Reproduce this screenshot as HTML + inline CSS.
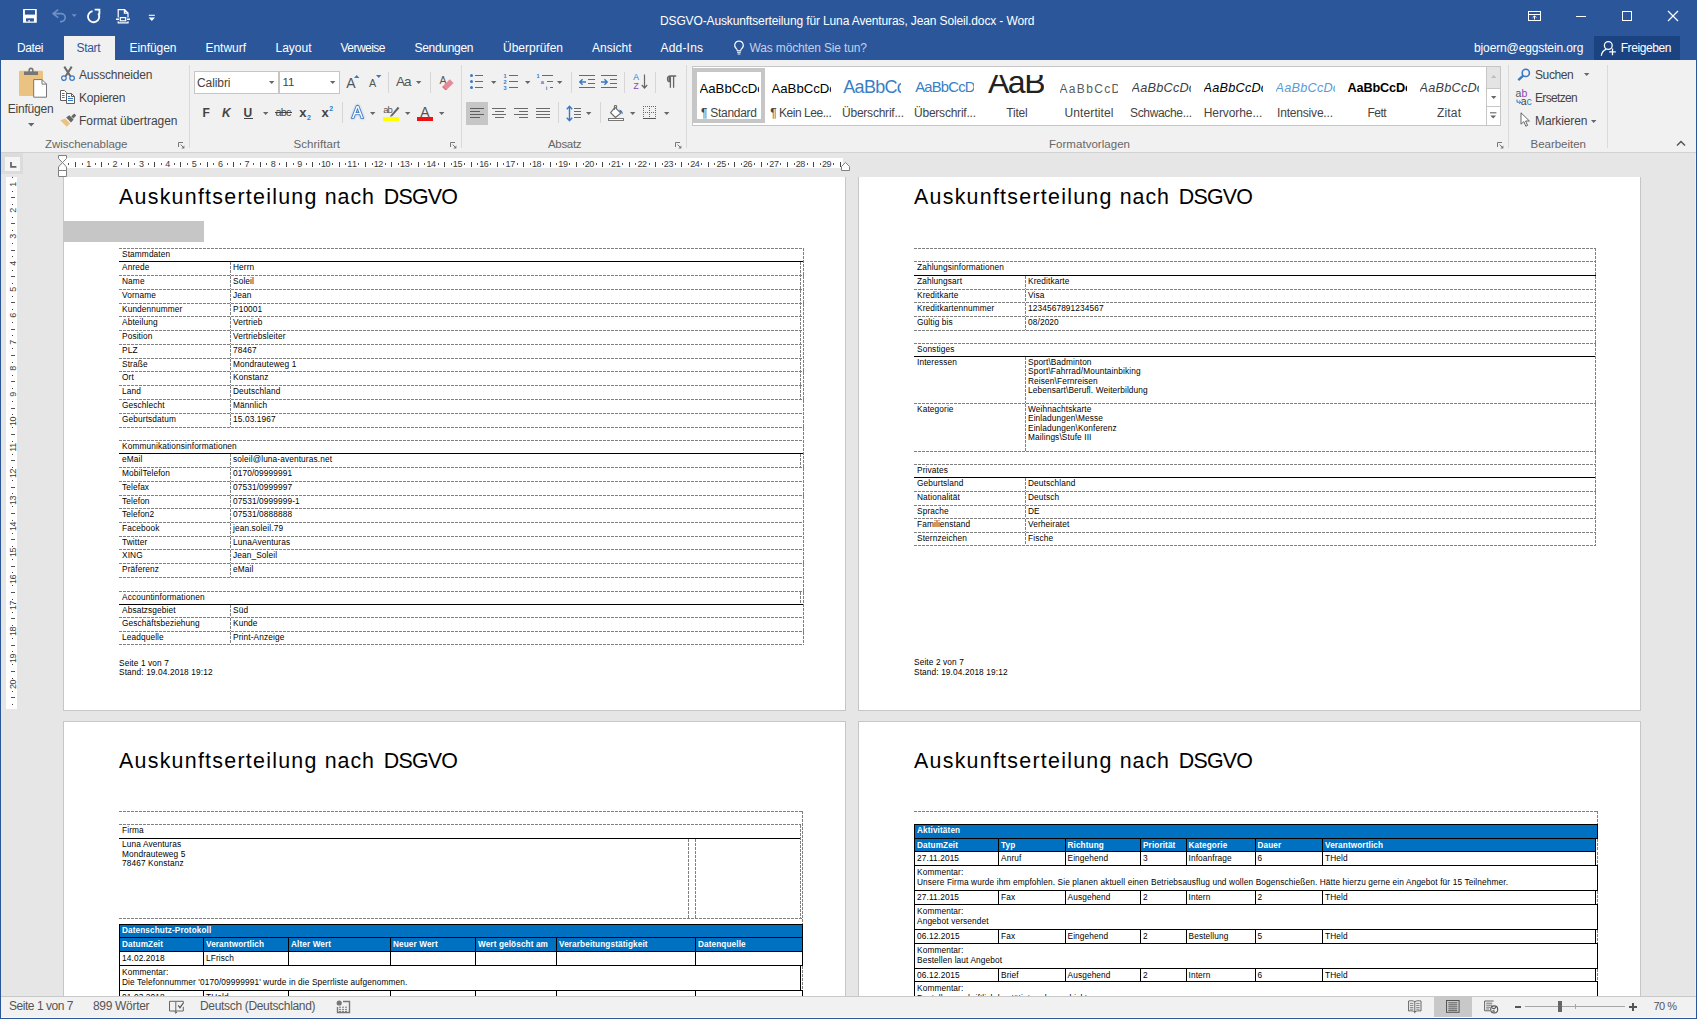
<!DOCTYPE html>
<html lang="de"><head><meta charset="utf-8"><title>DSGVO-Auskunftserteilung - Word</title><style>
html,body{margin:0;padding:0;}
body{width:1697px;height:1019px;overflow:hidden;position:relative;background:#e6e6e6;font-family:"Liberation Sans",sans-serif;}
.t{position:absolute;white-space:pre;line-height:1;}
.hd{position:absolute;height:1px;background:repeating-linear-gradient(90deg,#808080 0,#808080 3px,transparent 3px,transparent 4px);}
.vd{position:absolute;width:1px;background:repeating-linear-gradient(180deg,#808080 0,#808080 3px,transparent 3px,transparent 4px);}
</style></head>
<body>
<div style="position:absolute;left:63px;top:176px;width:783px;height:535px;background:#fff;border:1px solid #c6c6c6;box-sizing:border-box;"></div>
<div style="position:absolute;left:858px;top:176px;width:783px;height:535px;background:#fff;border:1px solid #c6c6c6;box-sizing:border-box;"></div>
<div style="position:absolute;left:63px;top:721px;width:783px;height:300px;background:#fff;border:1px solid #c6c6c6;box-sizing:border-box;"></div>
<div style="position:absolute;left:858px;top:721px;width:783px;height:300px;background:#fff;border:1px solid #c6c6c6;box-sizing:border-box;"></div>
<span class="t" style="left:119.00px;top:187.18px;font-size:21.40px;color:#000;width:340px;height:21.40px"><span style="position:absolute;left:0.00px;top:0;letter-spacing:1.261px">Auskunftserteilung</span> <span style="position:absolute;left:205.70px;top:0;letter-spacing:0.965px">nach</span> <span style="position:absolute;left:264.70px;top:0;letter-spacing:-0.749px">DSGVO</span></span>
<span class="t" style="left:914.00px;top:187.18px;font-size:21.40px;color:#000;width:340px;height:21.40px"><span style="position:absolute;left:0.00px;top:0;letter-spacing:1.261px">Auskunftserteilung</span> <span style="position:absolute;left:205.70px;top:0;letter-spacing:0.965px">nach</span> <span style="position:absolute;left:264.70px;top:0;letter-spacing:-0.749px">DSGVO</span></span>
<span class="t" style="left:119.00px;top:750.68px;font-size:21.40px;color:#000;width:340px;height:21.40px"><span style="position:absolute;left:0.00px;top:0;letter-spacing:1.261px">Auskunftserteilung</span> <span style="position:absolute;left:205.70px;top:0;letter-spacing:0.965px">nach</span> <span style="position:absolute;left:264.70px;top:0;letter-spacing:-0.749px">DSGVO</span></span>
<span class="t" style="left:914.00px;top:750.68px;font-size:21.40px;color:#000;width:340px;height:21.40px"><span style="position:absolute;left:0.00px;top:0;letter-spacing:1.261px">Auskunftserteilung</span> <span style="position:absolute;left:205.70px;top:0;letter-spacing:0.965px">nach</span> <span style="position:absolute;left:264.70px;top:0;letter-spacing:-0.749px">DSGVO</span></span>
<div style="position:absolute;left:63px;top:221px;width:140.5px;height:20.5px;background:#c6c6c6;"></div>
<div class="hd" style="left:119px;top:248px;width:685px"></div>
<span class="t" style="left:122.00px;top:249.97px;font-size:8.30px;color:#000;letter-spacing:0.120px;">Stammdaten</span>
<div style="position:absolute;left:119px;top:261px;width:685px;height:1px;background:#000;"></div>
<span class="t" style="left:122.00px;top:262.97px;font-size:8.30px;color:#000;letter-spacing:0.120px;">Anrede</span>
<span class="t" style="left:233.00px;top:262.97px;font-size:8.30px;color:#000;letter-spacing:0.120px;">Herrn</span>
<div class="vd" style="left:230px;top:262px;height:13px"></div>
<div class="hd" style="left:119px;top:275px;width:685px"></div>
<span class="t" style="left:122.00px;top:276.97px;font-size:8.30px;color:#000;letter-spacing:0.120px;">Name</span>
<span class="t" style="left:233.00px;top:276.97px;font-size:8.30px;color:#000;letter-spacing:0.120px;">Soleil</span>
<div class="vd" style="left:230px;top:276px;height:13px"></div>
<div class="hd" style="left:119px;top:289px;width:685px"></div>
<span class="t" style="left:122.00px;top:290.97px;font-size:8.30px;color:#000;letter-spacing:0.120px;">Vorname</span>
<span class="t" style="left:233.00px;top:290.97px;font-size:8.30px;color:#000;letter-spacing:0.120px;">Jean</span>
<div class="vd" style="left:230px;top:290px;height:13px"></div>
<div class="hd" style="left:119px;top:303px;width:685px"></div>
<span class="t" style="left:122.00px;top:304.97px;font-size:8.30px;color:#000;letter-spacing:0.120px;">Kundennummer</span>
<span class="t" style="left:233.00px;top:304.97px;font-size:8.30px;color:#000;letter-spacing:0.120px;">P10001</span>
<div class="vd" style="left:230px;top:304px;height:12px"></div>
<div class="hd" style="left:119px;top:316px;width:685px"></div>
<span class="t" style="left:122.00px;top:317.97px;font-size:8.30px;color:#000;letter-spacing:0.120px;">Abteilung</span>
<span class="t" style="left:233.00px;top:317.97px;font-size:8.30px;color:#000;letter-spacing:0.120px;">Vertrieb</span>
<div class="vd" style="left:230px;top:317px;height:13px"></div>
<div class="hd" style="left:119px;top:330px;width:685px"></div>
<span class="t" style="left:122.00px;top:331.97px;font-size:8.30px;color:#000;letter-spacing:0.120px;">Position</span>
<span class="t" style="left:233.00px;top:331.97px;font-size:8.30px;color:#000;letter-spacing:0.120px;">Vertriebsleiter</span>
<div class="vd" style="left:230px;top:331px;height:13px"></div>
<div class="hd" style="left:119px;top:344px;width:685px"></div>
<span class="t" style="left:122.00px;top:345.97px;font-size:8.30px;color:#000;letter-spacing:0.120px;">PLZ</span>
<span class="t" style="left:233.00px;top:345.97px;font-size:8.30px;color:#000;letter-spacing:0.120px;">78467</span>
<div class="vd" style="left:230px;top:345px;height:13px"></div>
<div class="hd" style="left:119px;top:358px;width:685px"></div>
<span class="t" style="left:122.00px;top:359.97px;font-size:8.30px;color:#000;letter-spacing:0.120px;">Straße</span>
<span class="t" style="left:233.00px;top:359.97px;font-size:8.30px;color:#000;letter-spacing:0.120px;">Mondrauteweg 1</span>
<div class="vd" style="left:230px;top:359px;height:12px"></div>
<div class="hd" style="left:119px;top:371px;width:685px"></div>
<span class="t" style="left:122.00px;top:372.97px;font-size:8.30px;color:#000;letter-spacing:0.120px;">Ort</span>
<span class="t" style="left:233.00px;top:372.97px;font-size:8.30px;color:#000;letter-spacing:0.120px;">Konstanz</span>
<div class="vd" style="left:230px;top:372px;height:13px"></div>
<div class="hd" style="left:119px;top:385px;width:685px"></div>
<span class="t" style="left:122.00px;top:386.97px;font-size:8.30px;color:#000;letter-spacing:0.120px;">Land</span>
<span class="t" style="left:233.00px;top:386.97px;font-size:8.30px;color:#000;letter-spacing:0.120px;">Deutschland</span>
<div class="vd" style="left:230px;top:386px;height:13px"></div>
<div class="hd" style="left:119px;top:399px;width:685px"></div>
<span class="t" style="left:122.00px;top:400.97px;font-size:8.30px;color:#000;letter-spacing:0.120px;">Geschlecht</span>
<span class="t" style="left:233.00px;top:400.97px;font-size:8.30px;color:#000;letter-spacing:0.120px;">Männlich</span>
<div class="vd" style="left:230px;top:400px;height:13px"></div>
<div class="hd" style="left:119px;top:413px;width:685px"></div>
<span class="t" style="left:122.00px;top:414.97px;font-size:8.30px;color:#000;letter-spacing:0.120px;">Geburtsdatum</span>
<span class="t" style="left:233.00px;top:414.97px;font-size:8.30px;color:#000;letter-spacing:0.120px;">15.03.1967</span>
<div class="vd" style="left:230px;top:414px;height:13px"></div>
<div class="hd" style="left:119px;top:427px;width:685px"></div>
<div class="hd" style="left:119px;top:440px;width:685px"></div>
<span class="t" style="left:122.00px;top:441.97px;font-size:8.30px;color:#000;letter-spacing:0.120px;">Kommunikationsinformationen</span>
<div style="position:absolute;left:119px;top:453px;width:685px;height:1px;background:#000;"></div>
<span class="t" style="left:122.00px;top:454.97px;font-size:8.30px;color:#000;letter-spacing:0.120px;">eMail</span>
<span class="t" style="left:233.00px;top:454.97px;font-size:8.30px;color:#000;letter-spacing:0.120px;">soleil@luna-aventuras.net</span>
<div class="vd" style="left:230px;top:454px;height:13px"></div>
<div class="hd" style="left:119px;top:467px;width:685px"></div>
<span class="t" style="left:122.00px;top:468.97px;font-size:8.30px;color:#000;letter-spacing:0.120px;">MobilTelefon</span>
<span class="t" style="left:233.00px;top:468.97px;font-size:8.30px;color:#000;letter-spacing:0.120px;">0170/09999991</span>
<div class="vd" style="left:230px;top:468px;height:13px"></div>
<div class="hd" style="left:119px;top:481px;width:685px"></div>
<span class="t" style="left:122.00px;top:482.97px;font-size:8.30px;color:#000;letter-spacing:0.120px;">Telefax</span>
<span class="t" style="left:233.00px;top:482.97px;font-size:8.30px;color:#000;letter-spacing:0.120px;">07531/0999997</span>
<div class="vd" style="left:230px;top:482px;height:13px"></div>
<div class="hd" style="left:119px;top:495px;width:685px"></div>
<span class="t" style="left:122.00px;top:496.97px;font-size:8.30px;color:#000;letter-spacing:0.120px;">Telefon</span>
<span class="t" style="left:233.00px;top:496.97px;font-size:8.30px;color:#000;letter-spacing:0.120px;">07531/0999999-1</span>
<div class="vd" style="left:230px;top:496px;height:12px"></div>
<div class="hd" style="left:119px;top:508px;width:685px"></div>
<span class="t" style="left:122.00px;top:509.97px;font-size:8.30px;color:#000;letter-spacing:0.120px;">Telefon2</span>
<span class="t" style="left:233.00px;top:509.97px;font-size:8.30px;color:#000;letter-spacing:0.120px;">07531/0888888</span>
<div class="vd" style="left:230px;top:509px;height:13px"></div>
<div class="hd" style="left:119px;top:522px;width:685px"></div>
<span class="t" style="left:122.00px;top:523.97px;font-size:8.30px;color:#000;letter-spacing:0.120px;">Facebook</span>
<span class="t" style="left:233.00px;top:523.97px;font-size:8.30px;color:#000;letter-spacing:0.120px;">jean.soleil.79</span>
<div class="vd" style="left:230px;top:523px;height:13px"></div>
<div class="hd" style="left:119px;top:536px;width:685px"></div>
<span class="t" style="left:122.00px;top:537.97px;font-size:8.30px;color:#000;letter-spacing:0.120px;">Twitter</span>
<span class="t" style="left:233.00px;top:537.97px;font-size:8.30px;color:#000;letter-spacing:0.120px;">LunaAventuras</span>
<div class="vd" style="left:230px;top:537px;height:12px"></div>
<div class="hd" style="left:119px;top:549px;width:685px"></div>
<span class="t" style="left:122.00px;top:550.97px;font-size:8.30px;color:#000;letter-spacing:0.120px;">XING</span>
<span class="t" style="left:233.00px;top:550.97px;font-size:8.30px;color:#000;letter-spacing:0.120px;">Jean_Soleil</span>
<div class="vd" style="left:230px;top:550px;height:13px"></div>
<div class="hd" style="left:119px;top:563px;width:685px"></div>
<span class="t" style="left:122.00px;top:564.97px;font-size:8.30px;color:#000;letter-spacing:0.120px;">Präferenz</span>
<span class="t" style="left:233.00px;top:564.97px;font-size:8.30px;color:#000;letter-spacing:0.120px;">eMail</span>
<div class="vd" style="left:230px;top:564px;height:13px"></div>
<div class="hd" style="left:119px;top:577px;width:685px"></div>
<div class="hd" style="left:119px;top:591px;width:685px"></div>
<span class="t" style="left:122.00px;top:592.97px;font-size:8.30px;color:#000;letter-spacing:0.120px;">Accountinformationen</span>
<div style="position:absolute;left:119px;top:604px;width:685px;height:1px;background:#000;"></div>
<span class="t" style="left:122.00px;top:605.97px;font-size:8.30px;color:#000;letter-spacing:0.120px;">Absatzsgebiet</span>
<span class="t" style="left:233.00px;top:605.97px;font-size:8.30px;color:#000;letter-spacing:0.120px;">Süd</span>
<div class="vd" style="left:230px;top:605px;height:12px"></div>
<div class="hd" style="left:119px;top:617px;width:685px"></div>
<span class="t" style="left:122.00px;top:618.97px;font-size:8.30px;color:#000;letter-spacing:0.120px;">Geschäftsbeziehung</span>
<span class="t" style="left:233.00px;top:618.97px;font-size:8.30px;color:#000;letter-spacing:0.120px;">Kunde</span>
<div class="vd" style="left:230px;top:618px;height:13px"></div>
<div class="hd" style="left:119px;top:631px;width:685px"></div>
<span class="t" style="left:122.00px;top:632.97px;font-size:8.30px;color:#000;letter-spacing:0.120px;">Leadquelle</span>
<span class="t" style="left:233.00px;top:632.97px;font-size:8.30px;color:#000;letter-spacing:0.120px;">Print-Anzeige</span>
<div class="vd" style="left:230px;top:632px;height:12px"></div>
<div class="hd" style="left:119px;top:644px;width:685px"></div>
<div class="vd" style="left:803px;top:248px;height:396px"></div>
<div class="vd" style="left:800px;top:262px;height:137px"></div>
<div class="vd" style="left:800px;top:454px;height:13px"></div>
<div class="vd" style="left:800px;top:592px;height:12px"></div>
<span class="t" style="left:119.00px;top:658.97px;font-size:8.30px;color:#000;letter-spacing:0.120px;">Seite 1 von 7</span>
<span class="t" style="left:119.00px;top:668.37px;font-size:8.30px;color:#000;letter-spacing:0.120px;">Stand: 19.04.2018 19:12</span>
<div class="hd" style="left:914px;top:248px;width:682px"></div>
<div class="hd" style="left:914px;top:261px;width:682px"></div>
<span class="t" style="left:917.00px;top:262.97px;font-size:8.30px;color:#000;letter-spacing:0.120px;">Zahlungsinformationen</span>
<div style="position:absolute;left:914px;top:275px;width:682px;height:1px;background:#000;"></div>
<span class="t" style="left:917.00px;top:276.97px;font-size:8.30px;color:#000;letter-spacing:0.120px;">Zahlungsart</span>
<span class="t" style="left:1028.00px;top:276.97px;font-size:8.30px;color:#000;letter-spacing:0.120px;">Kreditkarte</span>
<div class="vd" style="left:1025px;top:276px;height:13px"></div>
<div class="hd" style="left:914px;top:289px;width:682px"></div>
<span class="t" style="left:917.00px;top:290.97px;font-size:8.30px;color:#000;letter-spacing:0.120px;">Kreditkarte</span>
<span class="t" style="left:1028.00px;top:290.97px;font-size:8.30px;color:#000;letter-spacing:0.120px;">Visa</span>
<div class="vd" style="left:1025px;top:290px;height:12px"></div>
<div class="hd" style="left:914px;top:302px;width:682px"></div>
<span class="t" style="left:917.00px;top:303.97px;font-size:8.30px;color:#000;letter-spacing:0.120px;">Kreditkartennummer</span>
<span class="t" style="left:1028.00px;top:303.97px;font-size:8.30px;color:#000;letter-spacing:0.120px;">1234567891234567</span>
<div class="vd" style="left:1025px;top:303px;height:13px"></div>
<div class="hd" style="left:914px;top:316px;width:682px"></div>
<span class="t" style="left:917.00px;top:317.97px;font-size:8.30px;color:#000;letter-spacing:0.120px;">Gültig bis</span>
<span class="t" style="left:1028.00px;top:317.97px;font-size:8.30px;color:#000;letter-spacing:0.120px;">08/2020</span>
<div class="vd" style="left:1025px;top:317px;height:13px"></div>
<div class="hd" style="left:914px;top:330px;width:682px"></div>
<div class="hd" style="left:914px;top:343px;width:682px"></div>
<span class="t" style="left:917.00px;top:344.97px;font-size:8.30px;color:#000;letter-spacing:0.120px;">Sonstiges</span>
<div style="position:absolute;left:914px;top:356px;width:682px;height:1px;background:#000;"></div>
<span class="t" style="left:917.00px;top:357.97px;font-size:8.30px;color:#000;letter-spacing:0.120px;">Interessen</span>
<span class="t" style="left:1028.00px;top:357.97px;font-size:8.30px;color:#000;letter-spacing:0.120px;">Sport\Badminton</span>
<span class="t" style="left:1028.00px;top:367.32px;font-size:8.30px;color:#000;letter-spacing:0.120px;">Sport\Fahrrad/Mountainbiking</span>
<span class="t" style="left:1028.00px;top:376.67px;font-size:8.30px;color:#000;letter-spacing:0.120px;">Reisen\Fernreisen</span>
<span class="t" style="left:1028.00px;top:386.02px;font-size:8.30px;color:#000;letter-spacing:0.120px;">Lebensart\Berufl. Weiterbildung</span>
<div class="vd" style="left:1025px;top:357px;height:46px"></div>
<div class="hd" style="left:914px;top:403px;width:682px"></div>
<span class="t" style="left:917.00px;top:404.97px;font-size:8.30px;color:#000;letter-spacing:0.120px;">Kategorie</span>
<span class="t" style="left:1028.00px;top:404.97px;font-size:8.30px;color:#000;letter-spacing:0.120px;">Weihnachtskarte</span>
<span class="t" style="left:1028.00px;top:414.32px;font-size:8.30px;color:#000;letter-spacing:0.120px;">Einladungen\Messe</span>
<span class="t" style="left:1028.00px;top:423.67px;font-size:8.30px;color:#000;letter-spacing:0.120px;">Einladungen\Konferenz</span>
<span class="t" style="left:1028.00px;top:433.02px;font-size:8.30px;color:#000;letter-spacing:0.120px;">Mailings\Stufe III</span>
<div class="vd" style="left:1025px;top:404px;height:47px"></div>
<div class="hd" style="left:914px;top:451px;width:682px"></div>
<div class="hd" style="left:914px;top:464px;width:682px"></div>
<span class="t" style="left:917.00px;top:465.97px;font-size:8.30px;color:#000;letter-spacing:0.120px;">Privates</span>
<div style="position:absolute;left:914px;top:477px;width:682px;height:1px;background:#000;"></div>
<span class="t" style="left:917.00px;top:478.97px;font-size:8.30px;color:#000;letter-spacing:0.120px;">Geburtsland</span>
<span class="t" style="left:1028.00px;top:478.97px;font-size:8.30px;color:#000;letter-spacing:0.120px;">Deutschland</span>
<div class="vd" style="left:1025px;top:478px;height:13px"></div>
<div class="hd" style="left:914px;top:491px;width:682px"></div>
<span class="t" style="left:917.00px;top:492.97px;font-size:8.30px;color:#000;letter-spacing:0.120px;">Nationalität</span>
<span class="t" style="left:1028.00px;top:492.97px;font-size:8.30px;color:#000;letter-spacing:0.120px;">Deutsch</span>
<div class="vd" style="left:1025px;top:492px;height:13px"></div>
<div class="hd" style="left:914px;top:505px;width:682px"></div>
<span class="t" style="left:917.00px;top:506.97px;font-size:8.30px;color:#000;letter-spacing:0.120px;">Sprache</span>
<span class="t" style="left:1028.00px;top:506.97px;font-size:8.30px;color:#000;letter-spacing:0.120px;">DE</span>
<div class="vd" style="left:1025px;top:506px;height:12px"></div>
<div class="hd" style="left:914px;top:518px;width:682px"></div>
<span class="t" style="left:917.00px;top:519.97px;font-size:8.30px;color:#000;letter-spacing:0.120px;">Familienstand</span>
<span class="t" style="left:1028.00px;top:519.97px;font-size:8.30px;color:#000;letter-spacing:0.120px;">Verheiratet</span>
<div class="vd" style="left:1025px;top:519px;height:13px"></div>
<div class="hd" style="left:914px;top:532px;width:682px"></div>
<span class="t" style="left:917.00px;top:533.97px;font-size:8.30px;color:#000;letter-spacing:0.120px;">Sternzeichen</span>
<span class="t" style="left:1028.00px;top:533.97px;font-size:8.30px;color:#000;letter-spacing:0.120px;">Fische</span>
<div class="vd" style="left:1025px;top:533px;height:12px"></div>
<div class="hd" style="left:914px;top:545px;width:682px"></div>
<div class="vd" style="left:1595px;top:248px;height:297px"></div>
<span class="t" style="left:914.00px;top:658.47px;font-size:8.30px;color:#000;letter-spacing:0.120px;">Seite 2 von 7</span>
<span class="t" style="left:914.00px;top:667.97px;font-size:8.30px;color:#000;letter-spacing:0.120px;">Stand: 19.04.2018 19:12</span>
<div class="hd" style="left:119px;top:811px;width:684px"></div>
<div class="vd" style="left:802px;top:811px;height:113px"></div>
<div class="hd" style="left:119px;top:824px;width:682px"></div>
<span class="t" style="left:122.00px;top:826.47px;font-size:8.30px;color:#000;letter-spacing:0.120px;">Firma</span>
<div style="position:absolute;left:119px;top:838px;width:682px;height:1px;background:#000;"></div>
<span class="t" style="left:122.00px;top:840.27px;font-size:8.30px;color:#000;letter-spacing:0.120px;">Luna Aventuras</span>
<span class="t" style="left:122.00px;top:849.77px;font-size:8.30px;color:#000;letter-spacing:0.120px;">Mondrauteweg 5</span>
<span class="t" style="left:122.00px;top:859.27px;font-size:8.30px;color:#000;letter-spacing:0.120px;">78467 Konstanz</span>
<div class="vd" style="left:688px;top:839px;height:79px"></div>
<div class="vd" style="left:695px;top:839px;height:79px"></div>
<div class="vd" style="left:800px;top:825px;height:93px"></div>
<div class="hd" style="left:119px;top:918px;width:684px"></div>
<div style="position:absolute;left:119px;top:924px;width:684px;height:13px;background:#0070c0;"></div>
<div style="position:absolute;left:119px;top:937px;width:684px;height:14px;background:#0070c0;"></div>
<span class="t" style="left:122.00px;top:927.26px;font-size:8.20px;color:#fff;font-weight:bold;letter-spacing:0.120px;">Datenschutz-Protokoll</span>
<span class="t" style="left:122.00px;top:940.76px;font-size:8.20px;color:#fff;font-weight:bold;letter-spacing:0.120px;">DatumZeit</span>
<span class="t" style="left:206.00px;top:940.76px;font-size:8.20px;color:#fff;font-weight:bold;letter-spacing:0.120px;">Verantwortlich</span>
<span class="t" style="left:291.00px;top:940.76px;font-size:8.20px;color:#fff;font-weight:bold;letter-spacing:0.120px;">Alter Wert</span>
<span class="t" style="left:393.00px;top:940.76px;font-size:8.20px;color:#fff;font-weight:bold;letter-spacing:0.120px;">Neuer Wert</span>
<span class="t" style="left:478.00px;top:940.76px;font-size:8.20px;color:#fff;font-weight:bold;letter-spacing:0.120px;">Wert gelöscht am</span>
<span class="t" style="left:559.00px;top:940.76px;font-size:8.20px;color:#fff;font-weight:bold;letter-spacing:0.120px;">Verarbeitungstätigkeit</span>
<span class="t" style="left:698.00px;top:940.76px;font-size:8.20px;color:#fff;font-weight:bold;letter-spacing:0.120px;">Datenquelle</span>
<div style="position:absolute;left:119px;top:924px;width:684px;height:1px;background:#000;"></div>
<div style="position:absolute;left:119px;top:937px;width:684px;height:1px;background:#000;"></div>
<div style="position:absolute;left:119px;top:951px;width:684px;height:1px;background:#000;"></div>
<div style="position:absolute;left:802px;top:924px;width:1px;height:14px;background:#000;"></div>
<div style="position:absolute;left:802px;top:937px;width:1px;height:14px;background:#000;"></div>
<div style="position:absolute;left:203px;top:937px;width:1px;height:14px;background:#000;"></div>
<div style="position:absolute;left:288px;top:937px;width:1px;height:14px;background:#000;"></div>
<div style="position:absolute;left:390px;top:937px;width:1px;height:14px;background:#000;"></div>
<div style="position:absolute;left:475px;top:937px;width:1px;height:14px;background:#000;"></div>
<div style="position:absolute;left:556px;top:937px;width:1px;height:14px;background:#000;"></div>
<div style="position:absolute;left:695px;top:937px;width:1px;height:14px;background:#000;"></div>
<span class="t" style="left:122.00px;top:954.27px;font-size:8.30px;color:#000;letter-spacing:0.120px;">14.02.2018</span>
<span class="t" style="left:206.00px;top:954.27px;font-size:8.30px;color:#000;letter-spacing:0.120px;">LFrisch</span>
<div style="position:absolute;left:203px;top:951px;width:1px;height:14px;background:#000;"></div>
<div style="position:absolute;left:288px;top:951px;width:1px;height:14px;background:#000;"></div>
<div style="position:absolute;left:390px;top:951px;width:1px;height:14px;background:#000;"></div>
<div style="position:absolute;left:475px;top:951px;width:1px;height:14px;background:#000;"></div>
<div style="position:absolute;left:556px;top:951px;width:1px;height:14px;background:#000;"></div>
<div style="position:absolute;left:695px;top:951px;width:1px;height:14px;background:#000;"></div>
<div style="position:absolute;left:119px;top:965px;width:684px;height:1px;background:#000;"></div>
<div style="position:absolute;left:802px;top:951px;width:1px;height:15px;background:#000;"></div>
<span class="t" style="left:122.00px;top:967.97px;font-size:8.30px;color:#000;letter-spacing:0.120px;">Kommentar:</span>
<span class="t" style="left:122.00px;top:978.17px;font-size:8.30px;color:#000;letter-spacing:0.120px;">Die Telefonnummer &#x27;0170/09999991&#x27; wurde in die Sperrliste aufgenommen.</span>
<div style="position:absolute;left:119px;top:990px;width:684px;height:1px;background:#000;"></div>
<div style="position:absolute;left:800px;top:965px;width:1px;height:26px;background:#000;"></div>
<div class="vd" style="left:802px;top:966px;height:24px"></div>
<span class="t" style="left:122.00px;top:993.27px;font-size:8.30px;color:#000;letter-spacing:0.120px;">01.03.2018</span>
<span class="t" style="left:206.00px;top:993.27px;font-size:8.30px;color:#000;letter-spacing:0.120px;">THeld</span>
<div style="position:absolute;left:203px;top:990px;width:1px;height:14px;background:#000;"></div>
<div style="position:absolute;left:288px;top:990px;width:1px;height:14px;background:#000;"></div>
<div style="position:absolute;left:390px;top:990px;width:1px;height:14px;background:#000;"></div>
<div style="position:absolute;left:475px;top:990px;width:1px;height:14px;background:#000;"></div>
<div style="position:absolute;left:556px;top:990px;width:1px;height:14px;background:#000;"></div>
<div style="position:absolute;left:695px;top:990px;width:1px;height:14px;background:#000;"></div>
<div style="position:absolute;left:119px;top:1004px;width:684px;height:1px;background:#000;"></div>
<div style="position:absolute;left:802px;top:990px;width:1px;height:15px;background:#000;"></div>
<div style="position:absolute;left:119px;top:924px;width:1px;height:76px;background:#000;"></div>
<div class="hd" style="left:914px;top:811px;width:684px"></div>
<div class="vd" style="left:1597px;top:811px;height:13px"></div>
<div style="position:absolute;left:914px;top:824px;width:684px;height:14px;background:#0070c0;"></div>
<div style="position:absolute;left:914px;top:838px;width:682px;height:13px;background:#0070c0;"></div>
<span class="t" style="left:917.00px;top:827.26px;font-size:8.20px;color:#fff;font-weight:bold;letter-spacing:0.120px;">Aktivitäten</span>
<span class="t" style="left:917.00px;top:841.76px;font-size:8.20px;color:#fff;font-weight:bold;letter-spacing:0.120px;">DatumZeit</span>
<span class="t" style="left:1001.00px;top:841.76px;font-size:8.20px;color:#fff;font-weight:bold;letter-spacing:0.120px;">Typ</span>
<span class="t" style="left:1067.50px;top:841.76px;font-size:8.20px;color:#fff;font-weight:bold;letter-spacing:0.120px;">Richtung</span>
<span class="t" style="left:1143.00px;top:841.76px;font-size:8.20px;color:#fff;font-weight:bold;letter-spacing:0.120px;">Priorität</span>
<span class="t" style="left:1188.50px;top:841.76px;font-size:8.20px;color:#fff;font-weight:bold;letter-spacing:0.120px;">Kategorie</span>
<span class="t" style="left:1257.50px;top:841.76px;font-size:8.20px;color:#fff;font-weight:bold;letter-spacing:0.120px;">Dauer</span>
<span class="t" style="left:1325.00px;top:841.76px;font-size:8.20px;color:#fff;font-weight:bold;letter-spacing:0.120px;">Verantwortlich</span>
<div style="position:absolute;left:914px;top:824px;width:684px;height:1px;background:#000;"></div>
<div style="position:absolute;left:914px;top:838px;width:684px;height:1px;background:#000;"></div>
<div style="position:absolute;left:914px;top:851px;width:682px;height:1px;background:#000;"></div>
<div style="position:absolute;left:1597px;top:824px;width:1px;height:15px;background:#000;"></div>
<div style="position:absolute;left:1595px;top:838px;width:1px;height:13px;background:#000;"></div>
<div class="vd" style="left:1597px;top:839px;height:12px"></div>
<div style="position:absolute;left:998px;top:838px;width:1px;height:13px;background:#000;"></div>
<div style="position:absolute;left:1064.5px;top:838px;width:1px;height:13px;background:#000;"></div>
<div style="position:absolute;left:1140px;top:838px;width:1px;height:13px;background:#000;"></div>
<div style="position:absolute;left:1185.5px;top:838px;width:1px;height:13px;background:#000;"></div>
<div style="position:absolute;left:1254.5px;top:838px;width:1px;height:13px;background:#000;"></div>
<div style="position:absolute;left:1322px;top:838px;width:1px;height:13px;background:#000;"></div>
<span class="t" style="left:917.00px;top:854.27px;font-size:8.30px;color:#000;letter-spacing:0.120px;">27.11.2015</span>
<span class="t" style="left:1001.00px;top:854.27px;font-size:8.30px;color:#000;letter-spacing:0.120px;">Anruf</span>
<span class="t" style="left:1067.50px;top:854.27px;font-size:8.30px;color:#000;letter-spacing:0.120px;">Eingehend</span>
<span class="t" style="left:1143.00px;top:854.27px;font-size:8.30px;color:#000;letter-spacing:0.120px;">3</span>
<span class="t" style="left:1188.50px;top:854.27px;font-size:8.30px;color:#000;letter-spacing:0.120px;">Infoanfrage</span>
<span class="t" style="left:1257.50px;top:854.27px;font-size:8.30px;color:#000;letter-spacing:0.120px;">6</span>
<span class="t" style="left:1325.00px;top:854.27px;font-size:8.30px;color:#000;letter-spacing:0.120px;">THeld</span>
<div style="position:absolute;left:998px;top:851px;width:1px;height:14px;background:#000;"></div>
<div style="position:absolute;left:1064.5px;top:851px;width:1px;height:14px;background:#000;"></div>
<div style="position:absolute;left:1140px;top:851px;width:1px;height:14px;background:#000;"></div>
<div style="position:absolute;left:1185.5px;top:851px;width:1px;height:14px;background:#000;"></div>
<div style="position:absolute;left:1254.5px;top:851px;width:1px;height:14px;background:#000;"></div>
<div style="position:absolute;left:1322px;top:851px;width:1px;height:14px;background:#000;"></div>
<div style="position:absolute;left:914px;top:865px;width:684px;height:1px;background:#000;"></div>
<div style="position:absolute;left:1595px;top:851px;width:1px;height:15px;background:#000;"></div>
<div class="vd" style="left:1597px;top:852px;height:13px"></div>
<span class="t" style="left:917.00px;top:867.97px;font-size:8.30px;color:#000;letter-spacing:0.120px;">Kommentar:</span>
<span class="t" style="left:917.00px;top:878.17px;font-size:8.30px;color:#000;letter-spacing:0.120px;">Unsere Firma wurde ihm empfohlen. Sie planen aktuell einen Betriebsausflug und wollen Bogenschießen. Hätte hierzu gerne ein Angebot für 15 Teilnehmer.</span>
<div style="position:absolute;left:914px;top:890px;width:684px;height:1px;background:#000;"></div>
<div style="position:absolute;left:1597px;top:865px;width:1px;height:26px;background:#000;"></div>
<span class="t" style="left:917.00px;top:893.27px;font-size:8.30px;color:#000;letter-spacing:0.120px;">27.11.2015</span>
<span class="t" style="left:1001.00px;top:893.27px;font-size:8.30px;color:#000;letter-spacing:0.120px;">Fax</span>
<span class="t" style="left:1067.50px;top:893.27px;font-size:8.30px;color:#000;letter-spacing:0.120px;">Ausgehend</span>
<span class="t" style="left:1143.00px;top:893.27px;font-size:8.30px;color:#000;letter-spacing:0.120px;">2</span>
<span class="t" style="left:1188.50px;top:893.27px;font-size:8.30px;color:#000;letter-spacing:0.120px;">Intern</span>
<span class="t" style="left:1257.50px;top:893.27px;font-size:8.30px;color:#000;letter-spacing:0.120px;">2</span>
<span class="t" style="left:1325.00px;top:893.27px;font-size:8.30px;color:#000;letter-spacing:0.120px;">THeld</span>
<div style="position:absolute;left:998px;top:890px;width:1px;height:14px;background:#000;"></div>
<div style="position:absolute;left:1064.5px;top:890px;width:1px;height:14px;background:#000;"></div>
<div style="position:absolute;left:1140px;top:890px;width:1px;height:14px;background:#000;"></div>
<div style="position:absolute;left:1185.5px;top:890px;width:1px;height:14px;background:#000;"></div>
<div style="position:absolute;left:1254.5px;top:890px;width:1px;height:14px;background:#000;"></div>
<div style="position:absolute;left:1322px;top:890px;width:1px;height:14px;background:#000;"></div>
<div style="position:absolute;left:914px;top:904px;width:684px;height:1px;background:#000;"></div>
<div style="position:absolute;left:1595px;top:890px;width:1px;height:15px;background:#000;"></div>
<div class="vd" style="left:1597px;top:891px;height:13px"></div>
<span class="t" style="left:917.00px;top:906.97px;font-size:8.30px;color:#000;letter-spacing:0.120px;">Kommentar:</span>
<span class="t" style="left:917.00px;top:917.17px;font-size:8.30px;color:#000;letter-spacing:0.120px;">Angebot versendet</span>
<div style="position:absolute;left:914px;top:929px;width:684px;height:1px;background:#000;"></div>
<div style="position:absolute;left:1597px;top:904px;width:1px;height:26px;background:#000;"></div>
<span class="t" style="left:917.00px;top:932.27px;font-size:8.30px;color:#000;letter-spacing:0.120px;">06.12.2015</span>
<span class="t" style="left:1001.00px;top:932.27px;font-size:8.30px;color:#000;letter-spacing:0.120px;">Fax</span>
<span class="t" style="left:1067.50px;top:932.27px;font-size:8.30px;color:#000;letter-spacing:0.120px;">Eingehend</span>
<span class="t" style="left:1143.00px;top:932.27px;font-size:8.30px;color:#000;letter-spacing:0.120px;">2</span>
<span class="t" style="left:1188.50px;top:932.27px;font-size:8.30px;color:#000;letter-spacing:0.120px;">Bestellung</span>
<span class="t" style="left:1257.50px;top:932.27px;font-size:8.30px;color:#000;letter-spacing:0.120px;">5</span>
<span class="t" style="left:1325.00px;top:932.27px;font-size:8.30px;color:#000;letter-spacing:0.120px;">THeld</span>
<div style="position:absolute;left:998px;top:929px;width:1px;height:14px;background:#000;"></div>
<div style="position:absolute;left:1064.5px;top:929px;width:1px;height:14px;background:#000;"></div>
<div style="position:absolute;left:1140px;top:929px;width:1px;height:14px;background:#000;"></div>
<div style="position:absolute;left:1185.5px;top:929px;width:1px;height:14px;background:#000;"></div>
<div style="position:absolute;left:1254.5px;top:929px;width:1px;height:14px;background:#000;"></div>
<div style="position:absolute;left:1322px;top:929px;width:1px;height:14px;background:#000;"></div>
<div style="position:absolute;left:914px;top:943px;width:684px;height:1px;background:#000;"></div>
<div style="position:absolute;left:1595px;top:929px;width:1px;height:15px;background:#000;"></div>
<div class="vd" style="left:1597px;top:930px;height:13px"></div>
<span class="t" style="left:917.00px;top:945.97px;font-size:8.30px;color:#000;letter-spacing:0.120px;">Kommentar:</span>
<span class="t" style="left:917.00px;top:956.17px;font-size:8.30px;color:#000;letter-spacing:0.120px;">Bestellen laut Angebot</span>
<div style="position:absolute;left:914px;top:968px;width:684px;height:1px;background:#000;"></div>
<div style="position:absolute;left:1597px;top:943px;width:1px;height:26px;background:#000;"></div>
<span class="t" style="left:917.00px;top:971.27px;font-size:8.30px;color:#000;letter-spacing:0.120px;">06.12.2015</span>
<span class="t" style="left:1001.00px;top:971.27px;font-size:8.30px;color:#000;letter-spacing:0.120px;">Brief</span>
<span class="t" style="left:1067.50px;top:971.27px;font-size:8.30px;color:#000;letter-spacing:0.120px;">Ausgehend</span>
<span class="t" style="left:1143.00px;top:971.27px;font-size:8.30px;color:#000;letter-spacing:0.120px;">2</span>
<span class="t" style="left:1188.50px;top:971.27px;font-size:8.30px;color:#000;letter-spacing:0.120px;">Intern</span>
<span class="t" style="left:1257.50px;top:971.27px;font-size:8.30px;color:#000;letter-spacing:0.120px;">6</span>
<span class="t" style="left:1325.00px;top:971.27px;font-size:8.30px;color:#000;letter-spacing:0.120px;">THeld</span>
<div style="position:absolute;left:998px;top:968px;width:1px;height:13px;background:#000;"></div>
<div style="position:absolute;left:1064.5px;top:968px;width:1px;height:13px;background:#000;"></div>
<div style="position:absolute;left:1140px;top:968px;width:1px;height:13px;background:#000;"></div>
<div style="position:absolute;left:1185.5px;top:968px;width:1px;height:13px;background:#000;"></div>
<div style="position:absolute;left:1254.5px;top:968px;width:1px;height:13px;background:#000;"></div>
<div style="position:absolute;left:1322px;top:968px;width:1px;height:13px;background:#000;"></div>
<div style="position:absolute;left:914px;top:981px;width:684px;height:1px;background:#000;"></div>
<div style="position:absolute;left:1595px;top:968px;width:1px;height:14px;background:#000;"></div>
<div class="vd" style="left:1597px;top:969px;height:12px"></div>
<span class="t" style="left:917.00px;top:983.97px;font-size:8.30px;color:#000;letter-spacing:0.120px;">Kommentar:</span>
<span class="t" style="left:917.00px;top:994.17px;font-size:8.30px;color:#000;letter-spacing:0.120px;">Bestellung schriftlich bestätigt und verschickt</span>
<div style="position:absolute;left:914px;top:1006px;width:684px;height:1px;background:#000;"></div>
<div style="position:absolute;left:1597px;top:981px;width:1px;height:26px;background:#000;"></div>
<div style="position:absolute;left:914px;top:824px;width:1px;height:176px;background:#000;"></div>
<div style="position:absolute;left:0px;top:0px;width:1697px;height:60px;background:#2b579a;"></div>
<div style="position:absolute;left:0px;top:60px;width:1697px;height:92px;background:#f1f1f1;"></div>
<div style="position:absolute;left:0px;top:152px;width:1697px;height:1px;background:#d2d2d2;"></div>
<svg style="position:absolute;left:23px;top:9px;" width="14" height="14" viewBox="0 0 14 14"><rect x="0" y="0" width="13.800" height="13.800" rx="0.500" fill="#fff"/><rect x="1.900" y="1.100" width="10.100" height="4.500" fill="#2b579a"/><rect x="3" y="9.300" width="7.900" height="3.200" fill="#2b579a"/><rect x="5.300" y="11.200" width="1.700" height="1.400" fill="#fff"/></svg>
<svg style="position:absolute;left:51px;top:8px;" width="26" height="16" viewBox="0 0 26 16"><path d="M7.2 1.6 L2 5.6 L7.2 9.6 M2.4 5.6 H10.2 A4 4 0 0 1 10.2 13.6 H9" fill="none" stroke="#6f8fc6" stroke-width="1.7" stroke-linejoin="round"/><path d="M20.6 6.2h5.2l-2.6 2.8z" fill="#6f8fc6"/></svg>
<svg style="position:absolute;left:86px;top:8px;" width="16" height="16" viewBox="0 0 16 16"><path d="M6.600 3.100A5.600 5.600 0 1 0 12.300 5.600" fill="none" stroke="#fff" stroke-width="1.800"/><path d="M8.600 1.700H13.400V6.500" fill="none" stroke="#fff" stroke-width="1.800"/></svg>
<svg style="position:absolute;left:115px;top:8px;" width="16" height="16" viewBox="0 0 16 16"><path d="M3.2 9.5 V1.7 H9.6 L13 5 V9.5 M9.4 1.7 V5.2 H13" fill="none" stroke="#fff" stroke-width="1.2"/><path d="M1 11.2h3M12 11.2h3" stroke="#fff" stroke-width="1.6"/><rect x="5.3" y="9.6" width="5.4" height="3.2" fill="none" stroke="#fff" stroke-width="1.2"/><path d="M3.2 13.2 V14.8 H13 V13.2" fill="none" stroke="#fff" stroke-width="1.2"/></svg>
<svg style="position:absolute;left:148px;top:14px;" width="8" height="8" viewBox="0 0 8 8"><path d="M0.8 1.3h6" stroke="#fff" stroke-width="1.1"/><path d="M0.6 3.6h6.4l-3.2 3.4z" fill="#fff"/></svg>
<span class="t" style="left:660.00px;top:14.54px;font-size:12.00px;color:#fff;letter-spacing:-0.128px;">DSGVO-Auskunftserteilung für Luna Aventuras, Jean Soleil.docx - Word</span>
<svg style="position:absolute;left:1528px;top:11px;" width="13" height="10" viewBox="0 0 13 10"><rect x="0.500" y="0.500" width="12" height="9" fill="none" stroke="#fff" stroke-width="1"/><path d="M0.500 3.500h12" stroke="#fff" stroke-width="1"/><path d="M6.500 8.500V5M4.700 6.600l1.800-1.800 1.800 1.800" fill="none" stroke="#fff" stroke-width="1"/></svg>
<div style="position:absolute;left:1575.5px;top:16px;width:10.5px;height:1.2px;background:#fff;"></div>
<div style="position:absolute;left:1622px;top:11px;width:10px;height:10px;border:1.2px solid #fff;box-sizing:border-box;"></div>
<svg style="position:absolute;left:1667px;top:10px;" width="12" height="12" viewBox="0 0 12 12"><path d="M1 1l10 10M11 1L1 11" stroke="#fff" stroke-width="1.2"/></svg>
<div style="position:absolute;left:64px;top:36px;width:51px;height:24.5px;background:#f1f1f1;"></div>
<span class="t" style="left:17.00px;top:42.24px;font-size:12.00px;color:#fff;letter-spacing:-0.379px;">Datei</span>
<span class="t" style="left:76.50px;top:42.24px;font-size:12.00px;color:#2b579a;letter-spacing:-0.336px;">Start</span>
<span class="t" style="left:129.50px;top:42.24px;font-size:12.00px;color:#fff;letter-spacing:-0.054px;">Einfügen</span>
<span class="t" style="left:205.50px;top:42.24px;font-size:12.00px;color:#fff;letter-spacing:-0.030px;">Entwurf</span>
<span class="t" style="left:275.50px;top:42.24px;font-size:12.00px;color:#fff;letter-spacing:-0.006px;">Layout</span>
<span class="t" style="left:340.50px;top:42.24px;font-size:12.00px;color:#fff;letter-spacing:-0.528px;">Verweise</span>
<span class="t" style="left:414.50px;top:42.24px;font-size:12.00px;color:#fff;letter-spacing:-0.300px;">Sendungen</span>
<span class="t" style="left:503.00px;top:42.24px;font-size:12.00px;color:#fff;letter-spacing:-0.004px;">Überprüfen</span>
<span class="t" style="left:592.00px;top:42.24px;font-size:12.00px;color:#fff;letter-spacing:0.025px;">Ansicht</span>
<span class="t" style="left:660.50px;top:42.24px;font-size:12.00px;color:#fff;letter-spacing:0.191px;">Add-Ins</span>
<svg style="position:absolute;left:732.5px;top:40px;" width="12" height="16" viewBox="0 0 12 16"><path d="M6 1a4.300 4.300 0 0 0-2.600 7.700c.6.600.900 1.100.900 2h3.400c0-.900.300-1.400.900-2A4.300 4.300 0 0 0 6 1z" fill="none" stroke="#fff" stroke-width="1.100"/><path d="M4.200 12.200h3.600M4.600 14h2.800" stroke="#fff" stroke-width="1.100"/></svg>
<span class="t" style="left:749.50px;top:42.24px;font-size:12.00px;color:#c3d0e8;letter-spacing:-0.146px;">Was möchten Sie tun?</span>
<span class="t" style="left:1474.00px;top:42.24px;font-size:12.00px;color:#fff;letter-spacing:-0.127px;">bjoern@eggstein.org</span>
<div style="position:absolute;left:1594px;top:36px;width:86px;height:24px;background:#1b4381;"></div>
<svg style="position:absolute;left:1600px;top:40px;" width="17" height="17" viewBox="0 0 17 17"><circle cx="8.300" cy="5.500" r="3.900" fill="none" stroke="#fff" stroke-width="1.300"/><path d="M1.300 15.800c.4-3.500 2.200-5.600 4.900-6.500" fill="none" stroke="#fff" stroke-width="1.300"/><path d="M12.500 8.600v6.600M9.200 11.900h6.600" stroke="#fff" stroke-width="1.300"/></svg>
<span class="t" style="left:1620.70px;top:42.24px;font-size:12.00px;color:#fff;letter-spacing:-0.417px;">Freigeben</span>
<div style="position:absolute;left:189px;top:64.5px;width:1px;height:83px;background:#dadada;"></div>
<div style="position:absolute;left:461px;top:64.5px;width:1px;height:83px;background:#dadada;"></div>
<div style="position:absolute;left:686px;top:64.5px;width:1px;height:83px;background:#dadada;"></div>
<div style="position:absolute;left:1508px;top:64.5px;width:1px;height:83px;background:#dadada;"></div>
<div style="position:absolute;left:1606.5px;top:64.5px;width:1px;height:83px;background:#dadada;"></div>
<span class="t" style="left:45.00px;top:138.77px;font-size:11.50px;color:#666;letter-spacing:-0.047px;">Zwischenablage</span>
<span class="t" style="left:293.50px;top:138.77px;font-size:11.50px;color:#666;letter-spacing:0.054px;">Schriftart</span>
<span class="t" style="left:548.00px;top:138.77px;font-size:11.50px;color:#666;letter-spacing:-0.332px;">Absatz</span>
<span class="t" style="left:1049.00px;top:138.77px;font-size:11.50px;color:#666;letter-spacing:0.036px;">Formatvorlagen</span>
<span class="t" style="left:1530.50px;top:138.77px;font-size:11.50px;color:#666;letter-spacing:-0.014px;">Bearbeiten</span>
<svg style="position:absolute;left:178px;top:141.5px;" width="7" height="7" viewBox="0 0 7 7"><path d="M0.500 5V0.500H5" fill="none" stroke="#777" stroke-width="1"/><path d="M2.600 2.600L5.600 5.600" stroke="#777" stroke-width="1"/><path d="M6.400 3.400V6.400H3.400z" fill="#777"/></svg>
<svg style="position:absolute;left:450px;top:141.5px;" width="7" height="7" viewBox="0 0 7 7"><path d="M0.500 5V0.500H5" fill="none" stroke="#777" stroke-width="1"/><path d="M2.600 2.600L5.600 5.600" stroke="#777" stroke-width="1"/><path d="M6.400 3.400V6.400H3.400z" fill="#777"/></svg>
<svg style="position:absolute;left:675px;top:141.5px;" width="7" height="7" viewBox="0 0 7 7"><path d="M0.500 5V0.500H5" fill="none" stroke="#777" stroke-width="1"/><path d="M2.600 2.600L5.600 5.600" stroke="#777" stroke-width="1"/><path d="M6.400 3.400V6.400H3.400z" fill="#777"/></svg>
<svg style="position:absolute;left:1497px;top:141.5px;" width="7" height="7" viewBox="0 0 7 7"><path d="M0.500 5V0.500H5" fill="none" stroke="#777" stroke-width="1"/><path d="M2.600 2.600L5.600 5.600" stroke="#777" stroke-width="1"/><path d="M6.400 3.400V6.400H3.400z" fill="#777"/></svg>
<svg style="position:absolute;left:1676px;top:140px;" width="10" height="7" viewBox="0 0 10 7"><path d="M1 5.500L5 1.500L9 5.500" fill="none" stroke="#555" stroke-width="1.5"/></svg>
<svg style="position:absolute;left:18px;top:67px;" width="30" height="32" viewBox="0 0 30 32"><rect x="1" y="3.800" width="24" height="25.200" rx="1.200" fill="#eac282"/>
<path d="M6 4.500h4.400v-1.300a2.600 2.600 0 0 1 5.200 0v1.300h4.400v3.500H6z" fill="#767676"/><circle cx="13" cy="3.400" r="1.100" fill="#f1f1f1"/>
<path d="M15.700 12.600h8.300l4.500 4.500v13.100h-12.800z" fill="#fff" stroke="#767676" stroke-width="1"/><path d="M24 12.600v4.500h4.500" fill="none" stroke="#767676" stroke-width="1"/></svg>
<span class="t" style="left:7.70px;top:102.64px;font-size:12.00px;color:#444;letter-spacing:-0.196px;">Einfügen</span>
<svg style="position:absolute;left:27.5px;top:122.5px;" width="7" height="4" viewBox="0 0 7 4"><path d="M0 0h6.400L3.200 3.600z" fill="#666"/></svg>
<svg style="position:absolute;left:60px;top:66px;" width="16" height="16" viewBox="0 0 16 16"><path d="M4.300 0.600L10.400 10.200M11.700 0.600L5.600 10.200" stroke="#6a6a6a" stroke-width="2" fill="none"/>
<circle cx="3.900" cy="12.100" r="2.300" fill="none" stroke="#3b78c4" stroke-width="1.200"/><circle cx="12.100" cy="12.100" r="2.300" fill="none" stroke="#3b78c4" stroke-width="1.200"/></svg>
<span class="t" style="left:79.00px;top:68.84px;font-size:12.00px;color:#444;letter-spacing:-0.172px;">Ausschneiden</span>
<svg style="position:absolute;left:60px;top:90px;" width="16" height="15" viewBox="0 0 16 15"><path d="M0.500 0.500H4.500L6.500 2.500V10.500H0.500z" fill="#fff" stroke="#5f5f5f" stroke-width="1"/><path d="M2 3.500h2.600M2 5.500h2.600M2 7.500h2.600" stroke="#3b78c4" stroke-width="1"/>
<path d="M6.500 3.500H11.500L14.500 6.500V13.500H6.500z" fill="#fff" stroke="#5f5f5f" stroke-width="1"/><path d="M11.500 3.500V6.500H14.500" fill="none" stroke="#5f5f5f" stroke-width="1"/><path d="M8 6.500h2.200M8 8.500h5M8 10.500h5" stroke="#3b78c4" stroke-width="1"/></svg>
<span class="t" style="left:79.00px;top:91.84px;font-size:12.00px;color:#444;letter-spacing:-0.220px;">Kopieren</span>
<svg style="position:absolute;left:60px;top:112.5px;" width="17" height="15" viewBox="0 0 17 15"><path d="M0.300 7.200L5.200 5.600L10 10.400L6.700 13.800z" fill="#eac282"/><path d="M6.200 4.600L9.300 2.300L13.600 6.600L11 9.500z" fill="#666"/><path d="M11.200 3.200L14.300 0.600L16.200 2.500L13.400 5.400z" fill="#666"/></svg>
<span class="t" style="left:79.00px;top:114.84px;font-size:12.00px;color:#444;letter-spacing:-0.055px;">Format übertragen</span>
<div style="position:absolute;left:194px;top:71px;width:85px;height:23px;background:#fff;border:1px solid #c6c6c6;box-sizing:border-box;"></div>
<div style="position:absolute;left:279px;top:71px;width:61px;height:23px;background:#fff;border:1px solid #c6c6c6;box-sizing:border-box;"></div>
<span class="t" style="left:197.00px;top:76.84px;font-size:12.00px;color:#444;letter-spacing:-0.085px;">Calibri</span>
<span class="t" style="left:282.50px;top:77.27px;font-size:11.50px;color:#444;">11</span>
<svg style="position:absolute;left:268.8px;top:81.2px;" width="6.4" height="4" viewBox="0 0 6.4 4"><path d="M0 0h5.4 L2.7 3z" fill="#666"/></svg>
<svg style="position:absolute;left:329.5px;top:81.2px;" width="6.4" height="4" viewBox="0 0 6.4 4"><path d="M0 0h5.4 L2.7 3z" fill="#666"/></svg>
<span class="t" style="left:346.30px;top:75.75px;font-size:14.00px;color:#555;letter-spacing:0.162px;">A</span>
<svg style="position:absolute;left:353.6px;top:75px;" width="6" height="3.5" viewBox="0 0 6 3.5"><path d="M0 3L2.700 0L5.400 3z" fill="#3b78c4"/></svg>
<span class="t" style="left:369.00px;top:78.46px;font-size:10.80px;color:#555;letter-spacing:0.396px;">A</span>
<svg style="position:absolute;left:375.6px;top:75px;" width="6" height="3.5" viewBox="0 0 6 3.5"><path d="M0 0h5.400L2.700 3z" fill="#3b78c4"/></svg>
<div style="position:absolute;left:388px;top:71.5px;width:1px;height:21.2px;background:#d6d6d6;"></div>
<span class="t" style="left:396.00px;top:74.87px;font-size:13.50px;color:#555;letter-spacing:-1.013px;">Aa</span>
<svg style="position:absolute;left:416.3px;top:81.2px;" width="6.4" height="4" viewBox="0 0 6.4 4"><path d="M0 0h5.4 L2.7 3z" fill="#666"/></svg>
<div style="position:absolute;left:430px;top:71.5px;width:1px;height:21.2px;background:#d6d6d6;"></div>
<span class="t" style="left:439.50px;top:75.11px;font-size:10.50px;color:#555;letter-spacing:0.496px;">A</span>
<svg style="position:absolute;left:440px;top:76px;" width="15" height="14" viewBox="0 0 15 14"><path d="M3.200 9.800L9.800 3.200L13.600 7L7 13.600z" fill="#e8899a"/><path d="M2.100 10.900l1.100-1.100 3.800 3.800-1.100 1.100z" fill="#d96a7e"/></svg>
<span class="t" style="left:202.60px;top:106.54px;font-size:12.00px;color:#444;font-weight:bold;">F</span>
<span class="t" style="left:222.00px;top:106.54px;font-size:12.00px;color:#444;font-weight:bold;font-style:italic;">K</span>
<span class="t" style="left:243.60px;top:106.54px;font-size:12.00px;color:#444;font-weight:bold;">U</span>
<div style="position:absolute;left:244px;top:118px;width:8.5px;height:1px;background:#444;"></div>
<svg style="position:absolute;left:263.3px;top:112px;" width="6.4" height="4" viewBox="0 0 6.4 4"><path d="M0 0h5.4 L2.7 3z" fill="#666"/></svg>
<span class="t" style="left:275.50px;top:107.36px;font-size:10.80px;color:#444;letter-spacing:-0.707px;">abc</span>
<div style="position:absolute;left:274.8px;top:112.3px;width:17.4px;height:1px;background:#444;"></div>
<span class="t" style="left:299.30px;top:105.70px;font-size:13.00px;color:#444;font-weight:bold;">x</span>
<span class="t" style="left:307.00px;top:113.57px;font-size:7.00px;color:#3b78c4;font-weight:bold;">2</span>
<span class="t" style="left:321.40px;top:105.70px;font-size:13.00px;color:#444;font-weight:bold;">x</span>
<span class="t" style="left:329.30px;top:105.07px;font-size:7.00px;color:#3b78c4;font-weight:bold;">2</span>
<div style="position:absolute;left:342px;top:102.4px;width:1px;height:20.9px;background:#d6d6d6;"></div>
<svg style="position:absolute;left:348px;top:103px;overflow:visible;" width="19" height="19" viewBox="0 0 19 19"><text x="9.500" y="15.300" text-anchor="middle" font-size="16.500" font-family="Liberation Sans,sans-serif" fill="#fff" stroke="#3b78c4" stroke-width="1.700" paint-order="stroke" style="filter:drop-shadow(0 0 1px #8db6e8)">A</text></svg>
<svg style="position:absolute;left:370.3px;top:112px;" width="6.4" height="4" viewBox="0 0 6.4 4"><path d="M0 0h5.4 L2.7 3z" fill="#666"/></svg>
<span class="t" style="left:383.30px;top:104.76px;font-size:9.50px;color:#555;letter-spacing:-1.067px;">ab</span>
<svg style="position:absolute;left:388px;top:105px;" width="12" height="12" viewBox="0 0 12 12"><path d="M2.600 10.200L9.800 1.800L11.400 3.200L4.200 11.200L2 11.800z" fill="#666"/></svg>
<div style="position:absolute;left:383px;top:117px;width:16.2px;height:4px;background:#ffff00;"></div>
<svg style="position:absolute;left:404.8px;top:112px;" width="6.4" height="4" viewBox="0 0 6.4 4"><path d="M0 0h5.4 L2.7 3z" fill="#666"/></svg>
<span class="t" style="left:420.30px;top:104.75px;font-size:14.00px;color:#555;">A</span>
<div style="position:absolute;left:417px;top:117px;width:16.2px;height:4px;background:#ee1111;"></div>
<svg style="position:absolute;left:439.2px;top:112px;" width="6.4" height="4" viewBox="0 0 6.4 4"><path d="M0 0h5.4 L2.7 3z" fill="#666"/></svg>
<svg style="position:absolute;left:470px;top:74px;" width="3" height="3" viewBox="0 0 3 3"><circle cx="1.500" cy="1.500" r="1.500" fill="#3b78c4"/></svg>
<div style="position:absolute;left:474.5px;top:75px;width:8.5px;height:1px;background:#6a6a6a;"></div>
<svg style="position:absolute;left:470px;top:80px;" width="3" height="3" viewBox="0 0 3 3"><circle cx="1.500" cy="1.500" r="1.500" fill="#3b78c4"/></svg>
<div style="position:absolute;left:474.5px;top:81px;width:8.5px;height:1px;background:#6a6a6a;"></div>
<svg style="position:absolute;left:470px;top:86px;" width="3" height="3" viewBox="0 0 3 3"><circle cx="1.500" cy="1.500" r="1.500" fill="#3b78c4"/></svg>
<div style="position:absolute;left:474.5px;top:87px;width:8.5px;height:1px;background:#6a6a6a;"></div>
<svg style="position:absolute;left:490.9px;top:81.2px;" width="6.4" height="4" viewBox="0 0 6.4 4"><path d="M0 0h5.4 L2.7 3z" fill="#666"/></svg>
<svg style="position:absolute;left:503px;top:72px;" width="6" height="18" viewBox="0 0 6 18"><text x="0.6" y="5.6" font-size="5.6" font-weight="bold" fill="#3b78c4" font-family="Liberation Sans,sans-serif">1</text><text x="0.6" y="11.6" font-size="5.6" font-weight="bold" fill="#3b78c4" font-family="Liberation Sans,sans-serif">2</text><text x="0.6" y="17.6" font-size="5.6" font-weight="bold" fill="#3b78c4" font-family="Liberation Sans,sans-serif">3</text></svg>
<div style="position:absolute;left:509px;top:75px;width:9px;height:1px;background:#6a6a6a;"></div>
<div style="position:absolute;left:509px;top:81px;width:9px;height:1px;background:#6a6a6a;"></div>
<div style="position:absolute;left:509px;top:87px;width:9px;height:1px;background:#6a6a6a;"></div>
<svg style="position:absolute;left:524.8px;top:81.2px;" width="6.4" height="4" viewBox="0 0 6.4 4"><path d="M0 0h5.4 L2.7 3z" fill="#666"/></svg>
<svg style="position:absolute;left:536px;top:72px;" width="14" height="18" viewBox="0 0 14 18"><text x="0.6" y="5.6" font-size="5.6" font-weight="bold" fill="#3b78c4" font-family="Liberation Sans,sans-serif">1</text><text x="4.8" y="11.6" font-size="5.6" font-weight="bold" fill="#3b78c4" font-family="Liberation Sans,sans-serif">a</text><text x="9.8" y="17.6" font-size="5.6" font-weight="bold" fill="#3b78c4" font-family="Liberation Sans,sans-serif">i</text></svg>
<div style="position:absolute;left:542px;top:75px;width:11px;height:1px;background:#6a6a6a;"></div>
<div style="position:absolute;left:546.5px;top:81px;width:6.5px;height:1px;background:#6a6a6a;"></div>
<div style="position:absolute;left:550px;top:87px;width:3px;height:1px;background:#6a6a6a;"></div>
<svg style="position:absolute;left:557.2px;top:81.2px;" width="6.4" height="4" viewBox="0 0 6.4 4"><path d="M0 0h5.4 L2.7 3z" fill="#666"/></svg>
<div style="position:absolute;left:571px;top:71.5px;width:1px;height:21.2px;background:#d6d6d6;"></div>
<div style="position:absolute;left:579px;top:75px;width:16px;height:1px;background:#6a6a6a;"></div>
<div style="position:absolute;left:579px;top:87px;width:16px;height:1px;background:#6a6a6a;"></div>
<div style="position:absolute;left:587.5px;top:79px;width:7.5px;height:1px;background:#6a6a6a;"></div>
<div style="position:absolute;left:587.5px;top:83px;width:7.5px;height:1px;background:#6a6a6a;"></div>
<svg style="position:absolute;left:579px;top:77.5px;" width="8" height="8" viewBox="0 0 8 8"><path d="M7 4H0.800M3.600 1.200L0.800 4L3.600 6.800" fill="none" stroke="#3b78c4" stroke-width="1.400"/></svg>
<div style="position:absolute;left:601px;top:75px;width:16px;height:1px;background:#6a6a6a;"></div>
<div style="position:absolute;left:601px;top:87px;width:16px;height:1px;background:#6a6a6a;"></div>
<div style="position:absolute;left:609.5px;top:79px;width:7.5px;height:1px;background:#6a6a6a;"></div>
<div style="position:absolute;left:609.5px;top:83px;width:7.5px;height:1px;background:#6a6a6a;"></div>
<svg style="position:absolute;left:601px;top:77.5px;" width="8" height="8" viewBox="0 0 8 8"><path d="M0 4H6.200M3.400 1.200L6.200 4L3.400 6.800" fill="none" stroke="#3b78c4" stroke-width="1.400"/></svg>
<div style="position:absolute;left:624px;top:71.5px;width:1px;height:21.2px;background:#d6d6d6;"></div>
<svg style="position:absolute;left:633px;top:73px;" width="16" height="17" viewBox="0 0 16 17"><text x="0.2" y="7.3" font-size="8.6" font-weight="normal" fill="#3b78c4" font-family="Liberation Sans,sans-serif">A</text><text x="0.5" y="15.5" font-size="8.6" font-weight="normal" fill="#8e44ad" font-family="Liberation Sans,sans-serif">Z</text><path d="M11.500 1.500V14.800M8.800 12L11.500 15L14.200 12" fill="none" stroke="#666" stroke-width="1.200"/></svg>
<div style="position:absolute;left:655px;top:71.5px;width:1px;height:21.2px;background:#d6d6d6;"></div>
<svg style="position:absolute;left:665px;top:75px;" width="13" height="14" viewBox="0 0 13 14"><path d="M5.400 6.800A2.900 2.900 0 0 1 5.400 1H11.200M5.400 1V12.800M8.600 1V12.800" fill="none" stroke="#666" stroke-width="1.300"/><path d="M5.400 1.200A2.800 2.800 0 0 0 5.400 6.600z" fill="#666"/></svg>
<div style="position:absolute;left:466px;top:102px;width:22px;height:23px;background:#c6c6c6;"></div>
<div style="position:absolute;left:470px;top:108px;width:14px;height:1px;background:#5e5e5e;"></div>
<div style="position:absolute;left:492px;top:108px;width:14px;height:1px;background:#6a6a6a;"></div>
<div style="position:absolute;left:514px;top:108px;width:14px;height:1px;background:#6a6a6a;"></div>
<div style="position:absolute;left:536px;top:108px;width:14px;height:1px;background:#6a6a6a;"></div>
<div style="position:absolute;left:573.5px;top:108px;width:7.5px;height:1px;background:#6a6a6a;"></div>
<div style="position:absolute;left:470px;top:111px;width:9.5px;height:1px;background:#5e5e5e;"></div>
<div style="position:absolute;left:494.5px;top:111px;width:9px;height:1px;background:#6a6a6a;"></div>
<div style="position:absolute;left:519px;top:111px;width:9px;height:1px;background:#6a6a6a;"></div>
<div style="position:absolute;left:536px;top:111px;width:14px;height:1px;background:#6a6a6a;"></div>
<div style="position:absolute;left:573.5px;top:111px;width:7.5px;height:1px;background:#6a6a6a;"></div>
<div style="position:absolute;left:470px;top:114px;width:14px;height:1px;background:#5e5e5e;"></div>
<div style="position:absolute;left:492px;top:114px;width:14px;height:1px;background:#6a6a6a;"></div>
<div style="position:absolute;left:514px;top:114px;width:14px;height:1px;background:#6a6a6a;"></div>
<div style="position:absolute;left:536px;top:114px;width:14px;height:1px;background:#6a6a6a;"></div>
<div style="position:absolute;left:573.5px;top:114px;width:7.5px;height:1px;background:#6a6a6a;"></div>
<div style="position:absolute;left:470px;top:117px;width:9.5px;height:1px;background:#5e5e5e;"></div>
<div style="position:absolute;left:494.5px;top:117px;width:9px;height:1px;background:#6a6a6a;"></div>
<div style="position:absolute;left:519px;top:117px;width:9px;height:1px;background:#6a6a6a;"></div>
<div style="position:absolute;left:536px;top:117px;width:14px;height:1px;background:#6a6a6a;"></div>
<div style="position:absolute;left:573.5px;top:117px;width:7.5px;height:1px;background:#6a6a6a;"></div>
<div style="position:absolute;left:558px;top:102.4px;width:1px;height:20.9px;background:#d6d6d6;"></div>
<svg style="position:absolute;left:566px;top:104.5px;" width="8" height="17" viewBox="0 0 8 17"><path d="M3.500 1.500V15.500M0.800 4.200L3.500 1.200L6.200 4.200M0.800 12.800L3.500 15.800L6.200 12.800" fill="none" stroke="#3b78c4" stroke-width="1.400"/></svg>
<svg style="position:absolute;left:585.8px;top:112px;" width="6.4" height="4" viewBox="0 0 6.4 4"><path d="M0 0h5.4 L2.7 3z" fill="#666"/></svg>
<div style="position:absolute;left:600px;top:102.4px;width:1px;height:20.9px;background:#d6d6d6;"></div>
<svg style="position:absolute;left:607.5px;top:104px;" width="18" height="18" viewBox="0 0 18 18"><path d="M7 3.400L12.800 9.200L7.400 13.400L2.600 8.600z" fill="#fff" stroke="#666" stroke-width="1.100"/><path d="M6.400 6V1.600H8.600V4.800" fill="none" stroke="#666" stroke-width="1"/><path d="M11.400 5.400c2.200.6 3.800 2.400 3.400 5.200-.9-1.700-1.900-2.500-3.400-2.800z" fill="#3b78c4"/></svg>
<div style="position:absolute;left:608px;top:117.5px;width:16px;height:3.5px;background:#fff;border:1px solid #777;box-sizing:border-box;"></div>
<svg style="position:absolute;left:630.2px;top:112px;" width="6.4" height="4" viewBox="0 0 6.4 4"><path d="M0 0h5.4 L2.7 3z" fill="#666"/></svg>
<div style="position:absolute;left:643px;top:106px;width:13px;height:1px;background:repeating-linear-gradient(90deg,#6a6a6a 0,#6a6a6a 1px,transparent 1px,transparent 2px)"></div>
<div style="position:absolute;left:643px;top:112px;width:13px;height:1px;background:repeating-linear-gradient(90deg,#6a6a6a 0,#6a6a6a 1px,transparent 1px,transparent 2px)"></div>
<div style="position:absolute;left:643px;top:106px;width:1px;height:12px;background:repeating-linear-gradient(180deg,#6a6a6a 0,#6a6a6a 1px,transparent 1px,transparent 2px)"></div>
<div style="position:absolute;left:649px;top:106px;width:1px;height:12px;background:repeating-linear-gradient(180deg,#6a6a6a 0,#6a6a6a 1px,transparent 1px,transparent 2px)"></div>
<div style="position:absolute;left:655px;top:106px;width:1px;height:12px;background:repeating-linear-gradient(180deg,#6a6a6a 0,#6a6a6a 1px,transparent 1px,transparent 2px)"></div>
<div style="position:absolute;left:643px;top:118px;width:13px;height:1px;background:#555;"></div>
<svg style="position:absolute;left:664.2px;top:112px;" width="6.4" height="4" viewBox="0 0 6.4 4"><path d="M0 0h5.4 L2.7 3z" fill="#666"/></svg>
<div style="position:absolute;left:692px;top:66px;width:809px;height:60px;background:#fff;border:1px solid #c6c6c6;box-sizing:border-box;"></div>
<div style="position:absolute;left:693px;top:68px;width:72px;height:55px;border:4px solid #c6c6c6;box-sizing:border-box;"></div>
<div style="position:absolute;left:699.5px;top:75px;width:59px;height:28px;overflow:hidden"><span class="t" style="left:0;top:6.73px;font-size:13.2px;color:#000;letter-spacing:-0.007px;">AaBbCcDc</span></div>
<div style="position:absolute;left:771.5px;top:75px;width:59px;height:28px;overflow:hidden"><span class="t" style="left:0;top:6.73px;font-size:13.2px;color:#000;letter-spacing:-0.007px;">AaBbCcDc</span></div>
<div style="position:absolute;left:843.3px;top:75px;width:58px;height:28px;overflow:hidden"><span class="t" style="left:0;top:2.66px;font-size:18px;color:#3a7ec6;letter-spacing:-0.719px;">AaBbCcD</span></div>
<div style="position:absolute;left:915.2px;top:75px;width:59px;height:28px;overflow:hidden"><span class="t" style="left:0;top:5.37px;font-size:14.8px;color:#3a7ec6;letter-spacing:-0.777px;">AaBbCcDd</span></div>
<div style="position:absolute;left:988px;top:75px;width:56px;height:28px;overflow:hidden"><span class="t" style="left:0;top:-8.59px;font-size:32px;color:#222;letter-spacing:-1.496px;">AaB</span></div>
<div style="position:absolute;left:1059.5px;top:75px;width:58.5px;height:28px;overflow:hidden"><span class="t" style="left:0;top:7.74px;font-size:12px;color:#5a5a5a;letter-spacing:1.330px;">AaBbCcD</span></div>
<div style="position:absolute;left:1131.5px;top:75px;width:59px;height:28px;overflow:hidden"><span class="t" style="left:0;top:7.15px;font-size:12.7px;color:#404040;letter-spacing:0.236px;font-style:italic;">AaBbCcDc</span></div>
<div style="position:absolute;left:1203.5px;top:75px;width:59px;height:28px;overflow:hidden"><span class="t" style="left:0;top:7.15px;font-size:12.7px;color:#000;letter-spacing:0.236px;font-style:italic;">AaBbCcDc</span></div>
<div style="position:absolute;left:1275.5px;top:75px;width:59px;height:28px;overflow:hidden"><span class="t" style="left:0;top:7.15px;font-size:12.7px;color:#5b9bd5;letter-spacing:0.236px;font-style:italic;">AaBbCcDc</span></div>
<div style="position:absolute;left:1347.5px;top:75px;width:59px;height:28px;overflow:hidden"><span class="t" style="left:0;top:7.15px;font-size:12.7px;color:#000;letter-spacing:-0.142px;font-weight:bold;">AaBbCcDc</span></div>
<div style="position:absolute;left:1419.5px;top:75px;width:59px;height:28px;overflow:hidden"><span class="t" style="left:0;top:7.15px;font-size:12.7px;color:#404040;letter-spacing:0.236px;font-style:italic;">AaBbCcDc</span></div>
<span class="t" style="left:701.00px;top:106.64px;font-size:12.00px;color:#444;letter-spacing:-0.276px;">¶ Standard</span>
<span class="t" style="left:770.25px;top:106.64px;font-size:12.00px;color:#444;letter-spacing:-0.471px;">¶ Kein Lee...</span>
<span class="t" style="left:842.00px;top:106.64px;font-size:12.00px;color:#444;letter-spacing:-0.224px;">Überschrif...</span>
<span class="t" style="left:914.00px;top:106.64px;font-size:12.00px;color:#444;letter-spacing:-0.224px;">Überschrif...</span>
<span class="t" style="left:1006.25px;top:106.64px;font-size:12.00px;color:#444;letter-spacing:-0.181px;">Titel</span>
<span class="t" style="left:1064.50px;top:106.64px;font-size:12.00px;color:#444;letter-spacing:0.109px;">Untertitel</span>
<span class="t" style="left:1130.00px;top:106.64px;font-size:12.00px;color:#444;letter-spacing:-0.337px;">Schwache...</span>
<span class="t" style="left:1203.75px;top:106.64px;font-size:12.00px;color:#444;letter-spacing:-0.086px;">Hervorhe...</span>
<span class="t" style="left:1277.00px;top:106.64px;font-size:12.00px;color:#444;letter-spacing:-0.185px;">Intensive...</span>
<span class="t" style="left:1367.50px;top:106.64px;font-size:12.00px;color:#444;letter-spacing:-0.557px;">Fett</span>
<span class="t" style="left:1437.00px;top:106.64px;font-size:12.00px;color:#444;letter-spacing:0.165px;">Zitat</span>
<div style="position:absolute;left:1486px;top:67px;width:1px;height:58px;background:#c6c6c6;"></div>
<div style="position:absolute;left:1487px;top:67px;width:12.5px;height:20.5px;background:#e4e4e4;"></div>
<div style="position:absolute;left:1486px;top:87.5px;width:14px;height:1px;background:#c6c6c6;"></div>
<div style="position:absolute;left:1486px;top:106px;width:14px;height:1px;background:#c6c6c6;"></div>
<svg style="position:absolute;left:1490.5px;top:75px;" width="6" height="4" viewBox="0 0 6 4"><path d="M0 3L2.700 0L5.400 3z" fill="#bdbdbd"/></svg>
<svg style="position:absolute;left:1490.5px;top:95.5px;" width="6" height="4" viewBox="0 0 6 4"><path d="M0 0h5.400L2.700 3z" fill="#666"/></svg>
<svg style="position:absolute;left:1490px;top:112px;" width="7" height="8" viewBox="0 0 7 8"><path d="M0 0.800h6.400" stroke="#666" stroke-width="1.100"/><path d="M0.300 3.400h5.800L3.200 6.600z" fill="#666"/></svg>
<svg style="position:absolute;left:1516.5px;top:67.5px;" width="15" height="14" viewBox="0 0 15 14"><circle cx="8.800" cy="4.900" r="3.600" fill="none" stroke="#3b78c4" stroke-width="1.600"/><path d="M6.200 7.600L1.300 12.200" stroke="#3b78c4" stroke-width="2.300"/></svg>
<span class="t" style="left:1535.00px;top:68.84px;font-size:12.00px;color:#444;letter-spacing:-0.400px;">Suchen</span>
<svg style="position:absolute;left:1584px;top:73.2px;" width="6.4" height="4" viewBox="0 0 6.4 4"><path d="M0 0h5.4 L2.7 3z" fill="#666"/></svg>
<span class="t" style="left:1515.60px;top:87.51px;font-size:10.50px;color:#555;">a</span>
<span class="t" style="left:1521.50px;top:87.51px;font-size:10.50px;color:#8e44ad;">b</span>
<span class="t" style="left:1520.80px;top:95.91px;font-size:10.50px;color:#444;">a</span>
<span class="t" style="left:1526.60px;top:95.91px;font-size:10.50px;color:#3b78c4;">c</span>
<svg style="position:absolute;left:1515.5px;top:99px;" width="6" height="6" viewBox="0 0 6 6"><path d="M1 0.500v2.700h3.600M3.200 1.600l1.600 1.600-1.600 1.600" fill="none" stroke="#3b78c4" stroke-width="1"/></svg>
<span class="t" style="left:1535.00px;top:91.84px;font-size:12.00px;color:#444;letter-spacing:-0.665px;">Ersetzen</span>
<svg style="position:absolute;left:1519.5px;top:112px;" width="11" height="16" viewBox="0 0 11 16"><path d="M1 0.800V12.200L3.800 9.600L5.800 14.200L7.600 13.400L5.600 9L9.400 9z" fill="#fff" stroke="#555" stroke-width="0.900" stroke-linejoin="round"/></svg>
<span class="t" style="left:1535.00px;top:114.84px;font-size:12.00px;color:#444;letter-spacing:-0.107px;">Markieren</span>
<svg style="position:absolute;left:1591px;top:119.8px;" width="6.4" height="4" viewBox="0 0 6.4 4"><path d="M0 0h5.4 L2.7 3z" fill="#666"/></svg>
<div style="position:absolute;left:0px;top:153px;width:1697px;height:24px;background:#e6e6e6;"></div>
<div style="position:absolute;left:1px;top:153px;width:21.7px;height:21px;background:#dcdcdc;"></div>
<div style="position:absolute;left:4.5px;top:156.5px;width:15px;height:14px;background:#f5f5f5;"></div>
<svg style="position:absolute;left:10px;top:162px;" width="7" height="6" viewBox="0 0 7 6"><path d="M1 0V4.800H6.400" fill="none" stroke="#666" stroke-width="1.800"/></svg>
<div style="position:absolute;left:63px;top:158px;width:780px;height:10px;background:#fff;"></div>
<div style="position:absolute;left:68px;top:163px;width:1px;height:2px;background:#555;"></div>
<div style="position:absolute;left:82px;top:163px;width:1px;height:2px;background:#555;"></div>
<div style="position:absolute;left:75px;top:162px;width:1px;height:5px;background:#444;"></div>
<span class="t" style="left:86.17px;top:159.68px;font-size:9.00px;color:#3a3a3a;letter-spacing:-0.406px;">1</span>
<div style="position:absolute;left:95px;top:163px;width:1px;height:2px;background:#555;"></div>
<div style="position:absolute;left:108px;top:163px;width:1px;height:2px;background:#555;"></div>
<div style="position:absolute;left:101px;top:162px;width:1px;height:5px;background:#444;"></div>
<span class="t" style="left:112.54px;top:159.68px;font-size:9.00px;color:#3a3a3a;letter-spacing:-0.406px;">2</span>
<div style="position:absolute;left:121px;top:163px;width:1px;height:2px;background:#555;"></div>
<div style="position:absolute;left:134px;top:163px;width:1px;height:2px;background:#555;"></div>
<div style="position:absolute;left:128px;top:162px;width:1px;height:5px;background:#444;"></div>
<span class="t" style="left:138.91px;top:159.68px;font-size:9.00px;color:#3a3a3a;letter-spacing:-0.406px;">3</span>
<div style="position:absolute;left:148px;top:163px;width:1px;height:2px;background:#555;"></div>
<div style="position:absolute;left:161px;top:163px;width:1px;height:2px;background:#555;"></div>
<div style="position:absolute;left:154px;top:162px;width:1px;height:5px;background:#444;"></div>
<span class="t" style="left:165.28px;top:159.68px;font-size:9.00px;color:#3a3a3a;letter-spacing:-0.406px;">4</span>
<div style="position:absolute;left:174px;top:163px;width:1px;height:2px;background:#555;"></div>
<div style="position:absolute;left:187px;top:163px;width:1px;height:2px;background:#555;"></div>
<div style="position:absolute;left:180px;top:162px;width:1px;height:5px;background:#444;"></div>
<span class="t" style="left:191.65px;top:159.68px;font-size:9.00px;color:#3a3a3a;letter-spacing:-0.406px;">5</span>
<div style="position:absolute;left:200px;top:163px;width:1px;height:2px;background:#555;"></div>
<div style="position:absolute;left:213px;top:163px;width:1px;height:2px;background:#555;"></div>
<div style="position:absolute;left:207px;top:162px;width:1px;height:5px;background:#444;"></div>
<span class="t" style="left:218.02px;top:159.68px;font-size:9.00px;color:#3a3a3a;letter-spacing:-0.406px;">6</span>
<div style="position:absolute;left:227px;top:163px;width:1px;height:2px;background:#555;"></div>
<div style="position:absolute;left:240px;top:163px;width:1px;height:2px;background:#555;"></div>
<div style="position:absolute;left:233px;top:162px;width:1px;height:5px;background:#444;"></div>
<span class="t" style="left:244.39px;top:159.68px;font-size:9.00px;color:#3a3a3a;letter-spacing:-0.406px;">7</span>
<div style="position:absolute;left:253px;top:163px;width:1px;height:2px;background:#555;"></div>
<div style="position:absolute;left:266px;top:163px;width:1px;height:2px;background:#555;"></div>
<div style="position:absolute;left:260px;top:162px;width:1px;height:5px;background:#444;"></div>
<span class="t" style="left:270.76px;top:159.68px;font-size:9.00px;color:#3a3a3a;letter-spacing:-0.406px;">8</span>
<div style="position:absolute;left:279px;top:163px;width:1px;height:2px;background:#555;"></div>
<div style="position:absolute;left:293px;top:163px;width:1px;height:2px;background:#555;"></div>
<div style="position:absolute;left:286px;top:162px;width:1px;height:5px;background:#444;"></div>
<span class="t" style="left:297.13px;top:159.68px;font-size:9.00px;color:#3a3a3a;letter-spacing:-0.406px;">9</span>
<div style="position:absolute;left:306px;top:163px;width:1px;height:2px;background:#555;"></div>
<div style="position:absolute;left:319px;top:163px;width:1px;height:2px;background:#555;"></div>
<div style="position:absolute;left:312px;top:162px;width:1px;height:5px;background:#444;"></div>
<span class="t" style="left:321.00px;top:159.68px;font-size:9.00px;color:#3a3a3a;letter-spacing:-0.411px;">10</span>
<div style="position:absolute;left:332px;top:163px;width:1px;height:2px;background:#555;"></div>
<div style="position:absolute;left:345px;top:163px;width:1px;height:2px;background:#555;"></div>
<div style="position:absolute;left:339px;top:162px;width:1px;height:5px;background:#444;"></div>
<span class="t" style="left:347.37px;top:159.68px;font-size:9.00px;color:#3a3a3a;letter-spacing:0.257px;">11</span>
<div style="position:absolute;left:358px;top:163px;width:1px;height:2px;background:#555;"></div>
<div style="position:absolute;left:372px;top:163px;width:1px;height:2px;background:#555;"></div>
<div style="position:absolute;left:365px;top:162px;width:1px;height:5px;background:#444;"></div>
<span class="t" style="left:373.74px;top:159.68px;font-size:9.00px;color:#3a3a3a;letter-spacing:-0.411px;">12</span>
<div style="position:absolute;left:385px;top:163px;width:1px;height:2px;background:#555;"></div>
<div style="position:absolute;left:398px;top:163px;width:1px;height:2px;background:#555;"></div>
<div style="position:absolute;left:391px;top:162px;width:1px;height:5px;background:#444;"></div>
<span class="t" style="left:400.11px;top:159.68px;font-size:9.00px;color:#3a3a3a;letter-spacing:-0.411px;">13</span>
<div style="position:absolute;left:411px;top:163px;width:1px;height:2px;background:#555;"></div>
<div style="position:absolute;left:424px;top:163px;width:1px;height:2px;background:#555;"></div>
<div style="position:absolute;left:418px;top:162px;width:1px;height:5px;background:#444;"></div>
<span class="t" style="left:426.48px;top:159.68px;font-size:9.00px;color:#3a3a3a;letter-spacing:-0.411px;">14</span>
<div style="position:absolute;left:438px;top:163px;width:1px;height:2px;background:#555;"></div>
<div style="position:absolute;left:451px;top:163px;width:1px;height:2px;background:#555;"></div>
<div style="position:absolute;left:444px;top:162px;width:1px;height:5px;background:#444;"></div>
<span class="t" style="left:452.85px;top:159.68px;font-size:9.00px;color:#3a3a3a;letter-spacing:-0.411px;">15</span>
<div style="position:absolute;left:464px;top:163px;width:1px;height:2px;background:#555;"></div>
<div style="position:absolute;left:477px;top:163px;width:1px;height:2px;background:#555;"></div>
<div style="position:absolute;left:471px;top:162px;width:1px;height:5px;background:#444;"></div>
<span class="t" style="left:479.22px;top:159.68px;font-size:9.00px;color:#3a3a3a;letter-spacing:-0.411px;">16</span>
<div style="position:absolute;left:490px;top:163px;width:1px;height:2px;background:#555;"></div>
<div style="position:absolute;left:503px;top:163px;width:1px;height:2px;background:#555;"></div>
<div style="position:absolute;left:497px;top:162px;width:1px;height:5px;background:#444;"></div>
<span class="t" style="left:505.59px;top:159.68px;font-size:9.00px;color:#3a3a3a;letter-spacing:-0.411px;">17</span>
<div style="position:absolute;left:517px;top:163px;width:1px;height:2px;background:#555;"></div>
<div style="position:absolute;left:530px;top:163px;width:1px;height:2px;background:#555;"></div>
<div style="position:absolute;left:523px;top:162px;width:1px;height:5px;background:#444;"></div>
<span class="t" style="left:531.96px;top:159.68px;font-size:9.00px;color:#3a3a3a;letter-spacing:-0.411px;">18</span>
<div style="position:absolute;left:543px;top:163px;width:1px;height:2px;background:#555;"></div>
<div style="position:absolute;left:556px;top:163px;width:1px;height:2px;background:#555;"></div>
<div style="position:absolute;left:550px;top:162px;width:1px;height:5px;background:#444;"></div>
<span class="t" style="left:558.33px;top:159.68px;font-size:9.00px;color:#3a3a3a;letter-spacing:-0.411px;">19</span>
<div style="position:absolute;left:569px;top:163px;width:1px;height:2px;background:#555;"></div>
<div style="position:absolute;left:583px;top:163px;width:1px;height:2px;background:#555;"></div>
<div style="position:absolute;left:576px;top:162px;width:1px;height:5px;background:#444;"></div>
<span class="t" style="left:584.70px;top:159.68px;font-size:9.00px;color:#3a3a3a;letter-spacing:-0.411px;">20</span>
<div style="position:absolute;left:596px;top:163px;width:1px;height:2px;background:#555;"></div>
<div style="position:absolute;left:609px;top:163px;width:1px;height:2px;background:#555;"></div>
<div style="position:absolute;left:602px;top:162px;width:1px;height:5px;background:#444;"></div>
<span class="t" style="left:611.07px;top:159.68px;font-size:9.00px;color:#3a3a3a;letter-spacing:-0.411px;">21</span>
<div style="position:absolute;left:622px;top:163px;width:1px;height:2px;background:#555;"></div>
<div style="position:absolute;left:635px;top:163px;width:1px;height:2px;background:#555;"></div>
<div style="position:absolute;left:629px;top:162px;width:1px;height:5px;background:#444;"></div>
<span class="t" style="left:637.44px;top:159.68px;font-size:9.00px;color:#3a3a3a;letter-spacing:-0.411px;">22</span>
<div style="position:absolute;left:649px;top:163px;width:1px;height:2px;background:#555;"></div>
<div style="position:absolute;left:662px;top:163px;width:1px;height:2px;background:#555;"></div>
<div style="position:absolute;left:655px;top:162px;width:1px;height:5px;background:#444;"></div>
<span class="t" style="left:663.81px;top:159.68px;font-size:9.00px;color:#3a3a3a;letter-spacing:-0.411px;">23</span>
<div style="position:absolute;left:675px;top:163px;width:1px;height:2px;background:#555;"></div>
<div style="position:absolute;left:688px;top:163px;width:1px;height:2px;background:#555;"></div>
<div style="position:absolute;left:681px;top:162px;width:1px;height:5px;background:#444;"></div>
<span class="t" style="left:690.18px;top:159.68px;font-size:9.00px;color:#3a3a3a;letter-spacing:-0.411px;">24</span>
<div style="position:absolute;left:701px;top:163px;width:1px;height:2px;background:#555;"></div>
<div style="position:absolute;left:714px;top:163px;width:1px;height:2px;background:#555;"></div>
<div style="position:absolute;left:708px;top:162px;width:1px;height:5px;background:#444;"></div>
<span class="t" style="left:716.55px;top:159.68px;font-size:9.00px;color:#3a3a3a;letter-spacing:-0.411px;">25</span>
<div style="position:absolute;left:728px;top:163px;width:1px;height:2px;background:#555;"></div>
<div style="position:absolute;left:741px;top:163px;width:1px;height:2px;background:#555;"></div>
<div style="position:absolute;left:734px;top:162px;width:1px;height:5px;background:#444;"></div>
<span class="t" style="left:742.92px;top:159.68px;font-size:9.00px;color:#3a3a3a;letter-spacing:-0.411px;">26</span>
<div style="position:absolute;left:754px;top:163px;width:1px;height:2px;background:#555;"></div>
<div style="position:absolute;left:767px;top:163px;width:1px;height:2px;background:#555;"></div>
<div style="position:absolute;left:761px;top:162px;width:1px;height:5px;background:#444;"></div>
<span class="t" style="left:769.29px;top:159.68px;font-size:9.00px;color:#3a3a3a;letter-spacing:-0.411px;">27</span>
<div style="position:absolute;left:780px;top:163px;width:1px;height:2px;background:#555;"></div>
<div style="position:absolute;left:794px;top:163px;width:1px;height:2px;background:#555;"></div>
<div style="position:absolute;left:787px;top:162px;width:1px;height:5px;background:#444;"></div>
<span class="t" style="left:795.66px;top:159.68px;font-size:9.00px;color:#3a3a3a;letter-spacing:-0.411px;">28</span>
<div style="position:absolute;left:807px;top:163px;width:1px;height:2px;background:#555;"></div>
<div style="position:absolute;left:820px;top:163px;width:1px;height:2px;background:#555;"></div>
<div style="position:absolute;left:813px;top:162px;width:1px;height:5px;background:#444;"></div>
<span class="t" style="left:822.03px;top:159.68px;font-size:9.00px;color:#3a3a3a;letter-spacing:-0.411px;">29</span>
<div style="position:absolute;left:833px;top:163px;width:1px;height:2px;background:#555;"></div>
<div style="position:absolute;left:840px;top:162px;width:1px;height:5px;background:#444;"></div>
<svg style="position:absolute;left:58px;top:155px;" width="9" height="22" viewBox="0 0 9 22"><path d="M0.500 0.500H8.500V3.500L4.500 7.500L0.500 3.500zM4.500 7.500L8.500 12V15.500H0.500V12zM0.500 15.500H8.500V21.500H0.500z" fill="#fff" stroke="#808080" stroke-width="1" stroke-linejoin="round"/></svg>
<svg style="position:absolute;left:841px;top:162px;" width="9" height="9" viewBox="0 0 9 9"><path d="M0.500 8.500V4.500L4.500 0.500L8.500 4.500V8.500z" fill="#fff" stroke="#808080" stroke-width="1" stroke-linejoin="round"/></svg>
<div style="position:absolute;left:6px;top:177px;width:11px;height:532px;background:#fff;"></div>
<span class="t" style="left:5.70px;top:179.73px;font-size:9px;color:#3a3a3a;transform:rotate(-90deg);transform-origin:center center;width:14px;text-align:center;letter-spacing:-0.400px">1</span>
<div style="position:absolute;left:12.2px;top:190.513px;width:1.2px;height:1px;background:#3a3a3a;"></div>
<div style="position:absolute;left:12.2px;top:203.678px;width:1.2px;height:1px;background:#3a3a3a;"></div>
<div style="position:absolute;left:10.7px;top:197.095px;width:4.7px;height:1px;background:#555;"></div>
<span class="t" style="left:5.70px;top:206.06px;font-size:9px;color:#3a3a3a;transform:rotate(-90deg);transform-origin:center center;width:14px;text-align:center;letter-spacing:-0.400px">2</span>
<div style="position:absolute;left:12.2px;top:216.843px;width:1.2px;height:1px;background:#3a3a3a;"></div>
<div style="position:absolute;left:12.2px;top:230.007px;width:1.2px;height:1px;background:#3a3a3a;"></div>
<div style="position:absolute;left:10.7px;top:223.425px;width:4.7px;height:1px;background:#555;"></div>
<span class="t" style="left:5.70px;top:232.39px;font-size:9px;color:#3a3a3a;transform:rotate(-90deg);transform-origin:center center;width:14px;text-align:center;letter-spacing:-0.400px">3</span>
<div style="position:absolute;left:12.2px;top:243.172px;width:1.2px;height:1px;background:#3a3a3a;"></div>
<div style="position:absolute;left:12.2px;top:256.337px;width:1.2px;height:1px;background:#3a3a3a;"></div>
<div style="position:absolute;left:10.7px;top:249.755px;width:4.7px;height:1px;background:#555;"></div>
<span class="t" style="left:5.70px;top:258.72px;font-size:9px;color:#3a3a3a;transform:rotate(-90deg);transform-origin:center center;width:14px;text-align:center;letter-spacing:-0.400px">4</span>
<div style="position:absolute;left:12.2px;top:269.502px;width:1.2px;height:1px;background:#3a3a3a;"></div>
<div style="position:absolute;left:12.2px;top:282.667px;width:1.2px;height:1px;background:#3a3a3a;"></div>
<div style="position:absolute;left:10.7px;top:276.085px;width:4.7px;height:1px;background:#555;"></div>
<span class="t" style="left:5.70px;top:285.05px;font-size:9px;color:#3a3a3a;transform:rotate(-90deg);transform-origin:center center;width:14px;text-align:center;letter-spacing:-0.400px">5</span>
<div style="position:absolute;left:12.2px;top:295.832px;width:1.2px;height:1px;background:#3a3a3a;"></div>
<div style="position:absolute;left:12.2px;top:308.998px;width:1.2px;height:1px;background:#3a3a3a;"></div>
<div style="position:absolute;left:10.7px;top:302.415px;width:4.7px;height:1px;background:#555;"></div>
<span class="t" style="left:5.70px;top:311.38px;font-size:9px;color:#3a3a3a;transform:rotate(-90deg);transform-origin:center center;width:14px;text-align:center;letter-spacing:-0.400px">6</span>
<div style="position:absolute;left:12.2px;top:322.162px;width:1.2px;height:1px;background:#3a3a3a;"></div>
<div style="position:absolute;left:12.2px;top:335.327px;width:1.2px;height:1px;background:#3a3a3a;"></div>
<div style="position:absolute;left:10.7px;top:328.745px;width:4.7px;height:1px;background:#555;"></div>
<span class="t" style="left:5.70px;top:337.71px;font-size:9px;color:#3a3a3a;transform:rotate(-90deg);transform-origin:center center;width:14px;text-align:center;letter-spacing:-0.400px">7</span>
<div style="position:absolute;left:12.2px;top:348.492px;width:1.2px;height:1px;background:#3a3a3a;"></div>
<div style="position:absolute;left:12.2px;top:361.657px;width:1.2px;height:1px;background:#3a3a3a;"></div>
<div style="position:absolute;left:10.7px;top:355.075px;width:4.7px;height:1px;background:#555;"></div>
<span class="t" style="left:5.70px;top:364.04px;font-size:9px;color:#3a3a3a;transform:rotate(-90deg);transform-origin:center center;width:14px;text-align:center;letter-spacing:-0.400px">8</span>
<div style="position:absolute;left:12.2px;top:374.822px;width:1.2px;height:1px;background:#3a3a3a;"></div>
<div style="position:absolute;left:12.2px;top:387.988px;width:1.2px;height:1px;background:#3a3a3a;"></div>
<div style="position:absolute;left:10.7px;top:381.405px;width:4.7px;height:1px;background:#555;"></div>
<span class="t" style="left:5.70px;top:390.37px;font-size:9px;color:#3a3a3a;transform:rotate(-90deg);transform-origin:center center;width:14px;text-align:center;letter-spacing:-0.400px">9</span>
<div style="position:absolute;left:12.2px;top:401.152px;width:1.2px;height:1px;background:#3a3a3a;"></div>
<div style="position:absolute;left:12.2px;top:414.317px;width:1.2px;height:1px;background:#3a3a3a;"></div>
<div style="position:absolute;left:10.7px;top:407.735px;width:4.7px;height:1px;background:#555;"></div>
<span class="t" style="left:5.70px;top:416.70px;font-size:9px;color:#3a3a3a;transform:rotate(-90deg);transform-origin:center center;width:14px;text-align:center;letter-spacing:-0.400px">10</span>
<div style="position:absolute;left:12.2px;top:427.482px;width:1.2px;height:1px;background:#3a3a3a;"></div>
<div style="position:absolute;left:12.2px;top:440.647px;width:1.2px;height:1px;background:#3a3a3a;"></div>
<div style="position:absolute;left:10.7px;top:434.065px;width:4.7px;height:1px;background:#555;"></div>
<span class="t" style="left:5.70px;top:443.03px;font-size:9px;color:#3a3a3a;transform:rotate(-90deg);transform-origin:center center;width:14px;text-align:center;letter-spacing:-0.400px">11</span>
<div style="position:absolute;left:12.2px;top:453.812px;width:1.2px;height:1px;background:#3a3a3a;"></div>
<div style="position:absolute;left:12.2px;top:466.978px;width:1.2px;height:1px;background:#3a3a3a;"></div>
<div style="position:absolute;left:10.7px;top:460.395px;width:4.7px;height:1px;background:#555;"></div>
<span class="t" style="left:5.70px;top:469.36px;font-size:9px;color:#3a3a3a;transform:rotate(-90deg);transform-origin:center center;width:14px;text-align:center;letter-spacing:-0.400px">12</span>
<div style="position:absolute;left:12.2px;top:480.142px;width:1.2px;height:1px;background:#3a3a3a;"></div>
<div style="position:absolute;left:12.2px;top:493.307px;width:1.2px;height:1px;background:#3a3a3a;"></div>
<div style="position:absolute;left:10.7px;top:486.725px;width:4.7px;height:1px;background:#555;"></div>
<span class="t" style="left:5.70px;top:495.69px;font-size:9px;color:#3a3a3a;transform:rotate(-90deg);transform-origin:center center;width:14px;text-align:center;letter-spacing:-0.400px">13</span>
<div style="position:absolute;left:12.2px;top:506.472px;width:1.2px;height:1px;background:#3a3a3a;"></div>
<div style="position:absolute;left:12.2px;top:519.637px;width:1.2px;height:1px;background:#3a3a3a;"></div>
<div style="position:absolute;left:10.7px;top:513.055px;width:4.7px;height:1px;background:#555;"></div>
<span class="t" style="left:5.70px;top:522.02px;font-size:9px;color:#3a3a3a;transform:rotate(-90deg);transform-origin:center center;width:14px;text-align:center;letter-spacing:-0.400px">14</span>
<div style="position:absolute;left:12.2px;top:532.803px;width:1.2px;height:1px;background:#3a3a3a;"></div>
<div style="position:absolute;left:12.2px;top:545.967px;width:1.2px;height:1px;background:#3a3a3a;"></div>
<div style="position:absolute;left:10.7px;top:539.385px;width:4.7px;height:1px;background:#555;"></div>
<span class="t" style="left:5.70px;top:548.35px;font-size:9px;color:#3a3a3a;transform:rotate(-90deg);transform-origin:center center;width:14px;text-align:center;letter-spacing:-0.400px">15</span>
<div style="position:absolute;left:12.2px;top:559.132px;width:1.2px;height:1px;background:#3a3a3a;"></div>
<div style="position:absolute;left:12.2px;top:572.297px;width:1.2px;height:1px;background:#3a3a3a;"></div>
<div style="position:absolute;left:10.7px;top:565.715px;width:4.7px;height:1px;background:#555;"></div>
<span class="t" style="left:5.70px;top:574.68px;font-size:9px;color:#3a3a3a;transform:rotate(-90deg);transform-origin:center center;width:14px;text-align:center;letter-spacing:-0.400px">16</span>
<div style="position:absolute;left:12.2px;top:585.462px;width:1.2px;height:1px;background:#3a3a3a;"></div>
<div style="position:absolute;left:12.2px;top:598.627px;width:1.2px;height:1px;background:#3a3a3a;"></div>
<div style="position:absolute;left:10.7px;top:592.045px;width:4.7px;height:1px;background:#555;"></div>
<span class="t" style="left:5.70px;top:601.01px;font-size:9px;color:#3a3a3a;transform:rotate(-90deg);transform-origin:center center;width:14px;text-align:center;letter-spacing:-0.400px">17</span>
<div style="position:absolute;left:12.2px;top:611.792px;width:1.2px;height:1px;background:#3a3a3a;"></div>
<div style="position:absolute;left:12.2px;top:624.957px;width:1.2px;height:1px;background:#3a3a3a;"></div>
<div style="position:absolute;left:10.7px;top:618.375px;width:4.7px;height:1px;background:#555;"></div>
<span class="t" style="left:5.70px;top:627.34px;font-size:9px;color:#3a3a3a;transform:rotate(-90deg);transform-origin:center center;width:14px;text-align:center;letter-spacing:-0.400px">18</span>
<div style="position:absolute;left:12.2px;top:638.122px;width:1.2px;height:1px;background:#3a3a3a;"></div>
<div style="position:absolute;left:12.2px;top:651.287px;width:1.2px;height:1px;background:#3a3a3a;"></div>
<div style="position:absolute;left:10.7px;top:644.705px;width:4.7px;height:1px;background:#555;"></div>
<span class="t" style="left:5.70px;top:653.67px;font-size:9px;color:#3a3a3a;transform:rotate(-90deg);transform-origin:center center;width:14px;text-align:center;letter-spacing:-0.400px">19</span>
<div style="position:absolute;left:12.2px;top:664.452px;width:1.2px;height:1px;background:#3a3a3a;"></div>
<div style="position:absolute;left:12.2px;top:677.617px;width:1.2px;height:1px;background:#3a3a3a;"></div>
<div style="position:absolute;left:10.7px;top:671.035px;width:4.7px;height:1px;background:#555;"></div>
<span class="t" style="left:5.70px;top:680.00px;font-size:9px;color:#3a3a3a;transform:rotate(-90deg);transform-origin:center center;width:14px;text-align:center;letter-spacing:-0.400px">20</span>
<div style="position:absolute;left:12.2px;top:690.782px;width:1.2px;height:1px;background:#3a3a3a;"></div>
<div style="position:absolute;left:12.2px;top:703.947px;width:1.2px;height:1px;background:#3a3a3a;"></div>
<div style="position:absolute;left:10.7px;top:697.365px;width:4.7px;height:1px;background:#555;"></div>
<div style="position:absolute;left:12.2px;top:177.347px;width:1.2px;height:1px;background:#3a3a3a;"></div>
<div style="position:absolute;left:0px;top:996px;width:1697px;height:23px;background:#f1f1f1;"></div>
<div style="position:absolute;left:0px;top:996px;width:1697px;height:1px;background:#c8c8c8;"></div>
<span class="t" style="left:9.00px;top:1000.34px;font-size:12.00px;color:#555;letter-spacing:-0.462px;">Seite 1 von 7</span>
<span class="t" style="left:93.00px;top:1000.34px;font-size:12.00px;color:#555;letter-spacing:-0.317px;">899 Wörter</span>
<span class="t" style="left:200.00px;top:1000.34px;font-size:12.00px;color:#555;letter-spacing:-0.328px;">Deutsch (Deutschland)</span>
<span class="t" style="left:1653.50px;top:1001.19px;font-size:11.00px;color:#555;letter-spacing:-0.524px;">70 %</span>
<svg style="position:absolute;left:168.5px;top:999.5px;" width="16" height="14" viewBox="0 0 16 14"><path d="M6.800 1.300H0.500V11H6.800zM6.800 1.300H14.300V2.400M14.300 6.800V11H6.800M6.800 11V13.200M5.600 12l1.200 1.200 1.200-1.200" fill="none" stroke="#666" stroke-width="1"/><path d="M9.200 5.300L11 7.700L14.700 2.500" fill="none" stroke="#555" stroke-width="1.200"/></svg>
<svg style="position:absolute;left:335.5px;top:999.5px;" width="15" height="14" viewBox="0 0 15 14"><circle cx="3.200" cy="3" r="2.600" fill="#777"/><path d="M7 1.500H13.500V12.500H1.500V7" fill="none" stroke="#777" stroke-width="1.400"/><path d="M3 7.200h9M3 9.400h9M3 11.400h9" stroke="#777" stroke-width="1" stroke-dasharray="2 1"/></svg>
<svg style="position:absolute;left:1407.5px;top:999.5px;" width="14" height="14" viewBox="0 0 14 14"><path d="M6.800 1.600C5 0.600 2.800 0.600 0.600 1V11C2.800 10.600 5 10.800 6.800 11.800C8.600 10.800 10.800 10.600 13 11V1C10.800 0.600 8.600 0.600 6.800 1.600zM6.800 1.600V13.200" fill="none" stroke="#666" stroke-width="1"/><path d="M2 3.400h3.400M2 5.400h3.400M2 7.400h3.400M2 9.200h3.400M8.200 3.400h3.400M8.200 5.400h3.400M8.200 7.400h3.400M8.200 9.200h3.400" stroke="#666" stroke-width="0.800"/></svg>
<div style="position:absolute;left:1434.3px;top:997px;width:37.5px;height:20px;background:#c8c8c8;"></div>
<svg style="position:absolute;left:1446px;top:1000px;" width="14" height="13" viewBox="0 0 14 13"><rect x="0.500" y="0.500" width="12.600" height="11.800" fill="none" stroke="#555" stroke-width="1"/><path d="M2.400 2.800h8.800M2.400 4.800h8.800M2.400 6.800h8.800M2.400 8.800h8.800M2.400 10.600h8.800" stroke="#555" stroke-width="0.900"/></svg>
<svg style="position:absolute;left:1484px;top:999.5px;" width="15" height="14" viewBox="0 0 15 14"><path d="M9.600 1H0.600V10.800H6" fill="none" stroke="#666" stroke-width="1"/><path d="M2.200 3.200h6M2.200 5.200h6M2.200 7.200h4M2.200 9h3" stroke="#666" stroke-width="0.900"/><circle cx="10.200" cy="9.400" r="3.500" fill="#f1f1f1" stroke="#555" stroke-width="1.100"/><path d="M8 8.200c1.200-.4 1.600.8 2.400.6.800-.2.600-1.400 1.600-1.600M8.400 11.400c.6-.8 1.600-.6 2.200.2" fill="none" stroke="#555" stroke-width="1.100"/></svg>
<div style="position:absolute;left:1514.8px;top:1006.2px;width:6px;height:1.5px;background:#555;"></div>
<div style="position:absolute;left:1524.8px;top:1006px;width:100px;height:1px;background:#a6a6a6;"></div>
<div style="position:absolute;left:1575px;top:1004px;width:1px;height:5.2px;background:#a6a6a6;"></div>
<div style="position:absolute;left:1558px;top:1001px;width:4px;height:11px;background:#666;"></div>
<div style="position:absolute;left:1629px;top:1006.2px;width:8px;height:1.5px;background:#555;"></div>
<div style="position:absolute;left:1632.25px;top:1003px;width:1.5px;height:8px;background:#555;"></div>
<div style="position:absolute;left:0px;top:1017px;width:1697px;height:1px;background:#fbfaf7;"></div>
<div style="position:absolute;left:0px;top:1018px;width:1697px;height:1px;background:#2b579a;"></div>
<div style="position:absolute;left:1695px;top:153px;width:1px;height:843px;background:#f1efec;"></div>
<div style="position:absolute;left:0px;top:0px;width:1px;height:1019px;background:#2b579a;"></div>
<div style="position:absolute;left:1696px;top:0px;width:1px;height:1019px;background:#2b579a;"></div>
</body></html>
